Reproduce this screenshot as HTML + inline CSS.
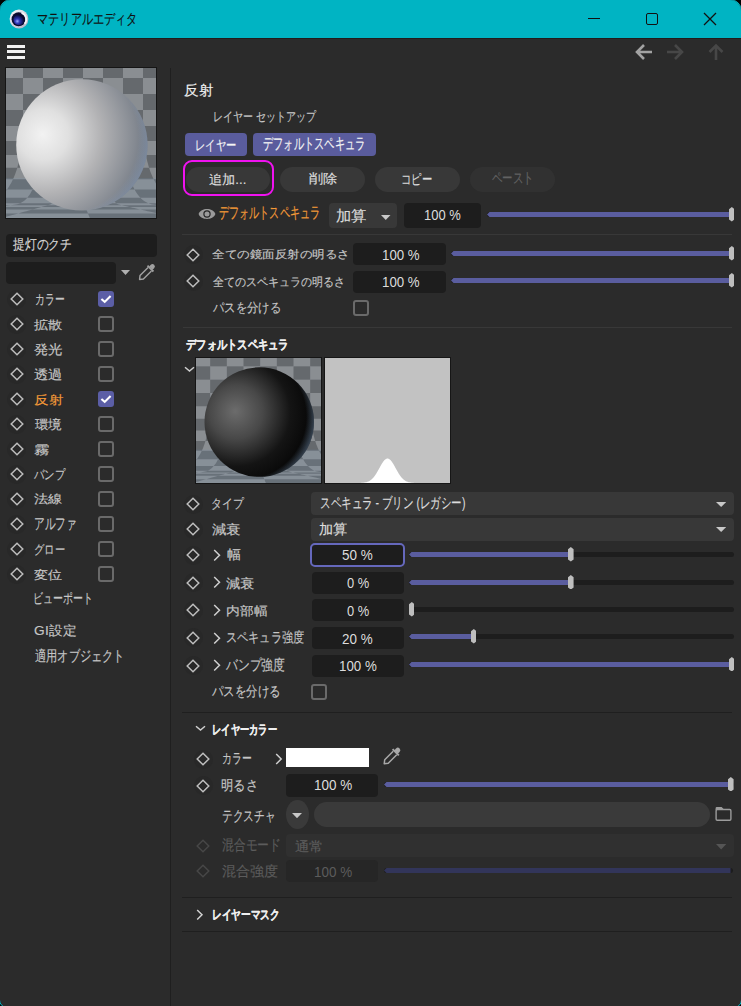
<!DOCTYPE html>
<html lang="ja">
<head>
<meta charset="utf-8">
<style>
*{box-sizing:border-box;margin:0;padding:0}
html,body{width:741px;height:1006px;overflow:hidden;background:#000}
body{font-family:"Liberation Sans",sans-serif;font-size:13px;color:#c9c9c9;position:relative}
.a{position:absolute}
.t{position:absolute;white-space:nowrap;transform-origin:0 0;-webkit-text-stroke:0.15px currentColor}
#win{position:absolute;left:-1px;top:-1px;width:743px;height:1009px;background:#2b2b2b;border:1px solid #00b4c3;border-radius:12px 12px 8px 8px;overflow:hidden}
#title{position:absolute;left:0;top:0;width:741px;height:38px;background:#00b4c3}
</style>
</head>
<body>
<div id="win">
  <div id="title">
    <svg class="a" style="left:9px;top:9px" width="20" height="20" viewBox="0 0 20 20">
      <defs>
        <radialGradient id="lg1" cx="35%" cy="65%" r="60%"><stop offset="0" stop-color="#9aa8ff"/><stop offset="0.35" stop-color="#3038b8"/><stop offset="0.8" stop-color="#12145a"/><stop offset="1" stop-color="#080828"/></radialGradient>
        <linearGradient id="lg2" x1="0" y1="0" x2="1" y2="1"><stop offset="0" stop-color="#ffffff"/><stop offset="1" stop-color="#a8a8c0"/></linearGradient>
      </defs>
      <circle cx="10" cy="10" r="9.4" fill="url(#lg2)"/>
      <circle cx="9.6" cy="10.2" r="7" fill="#0a0a30"/>
      <ellipse cx="10" cy="10.6" rx="5.6" ry="5.4" fill="url(#lg1)"/>
      <path d="M12.5 3.8A7 7 0 0 1 15.6 14.8" stroke="#f4f4f8" stroke-width="1.8" fill="none"/>
    </svg>
    <div class="a" style="left:588px;top:18px;width:12px;height:1px;background:#111"></div>
    <div class="a" style="left:646px;top:13px;width:12px;height:12px;border:1.3px solid #111;border-radius:2px"></div>
    <svg class="a" style="left:703px;top:12px" width="14" height="14" viewBox="0 0 14 14"><path d="M1 1L13 13M13 1L1 13" stroke="#111" stroke-width="1.3"/></svg>
  </div>
  <div class="a" style="left:0;top:38px;width:741px;height:1px;background:#221c1c"></div>
  <div class="a" style="left:7px;top:45px;width:18px;height:3px;background:#f2f2f2"></div>
  <div class="a" style="left:7px;top:50px;width:18px;height:3px;background:#f2f2f2"></div>
  <div class="a" style="left:7px;top:56px;width:18px;height:3px;background:#f2f2f2"></div>
  <svg class="a" style="left:634px;top:43px" width="20" height="18" viewBox="0 0 20 18"><path d="M3 9H18M10 2L3 9L10 16" stroke="#a2a2a2" stroke-width="2.6" fill="none"/></svg>
  <svg class="a" style="left:665px;top:43px" width="20" height="18" viewBox="0 0 20 18"><path d="M2 9H17M10 2L17 9L10 16" stroke="#474747" stroke-width="2.6" fill="none"/></svg>
  <svg class="a" style="left:706px;top:42px" width="20" height="20" viewBox="0 0 20 20"><path d="M10 3.5V18M3.5 10L10 3.5L16.5 10" stroke="#474747" stroke-width="2.6" fill="none"/></svg>
  <div class="a" style="left:170px;top:68px;width:1px;height:938px;background:#1f1f1f"></div>
<svg class="a" style="left:5px;top:67px" width="152" height="152" viewBox="0 0 152 152">
<defs>
<radialGradient id="sp1" cx="0.22" cy="0.44" r="0.88" fx="0.20" fy="0.42">
<stop offset="0" stop-color="#f2f2f2"/><stop offset="0.22" stop-color="#e0e0e0"/><stop offset="0.5" stop-color="#b2b2b4"/><stop offset="0.78" stop-color="#858a92"/><stop offset="1" stop-color="#5c6674"/></radialGradient>
<radialGradient id="rim1" cx="0.36" cy="0.45" r="0.66"><stop offset="0.86" stop-color="#8aa0c0" stop-opacity="0"/><stop offset="1" stop-color="#8aa0c0" stop-opacity="0.5"/></radialGradient>
<linearGradient id="rimm1" x1="0" y1="0" x2="1" y2="0"><stop offset="0.55" stop-color="#000" stop-opacity="0"/><stop offset="1" stop-color="#fff" stop-opacity="1"/></linearGradient>
<mask id="mk1"><rect width="152" height="152" fill="url(#rimm1)"/></mask>
</defs>
<rect width="152" height="152" fill="#151515"/>
<g transform="translate(1,1) scale(1.0)"><svg width="150" height="150" viewBox="0 0 150 150" overflow="hidden">
<rect width="150" height="150" fill="#8a8e92"/>
<polygon points="-163.0,-20.0 -163.0,-17.7 -163.0,-15.3 -163.0,-13.0 -163.0,-10.7 -163.0,-8.3 -163.0,-6.0 -143.0,-6.0 -143.0,-8.3 -143.0,-10.7 -143.0,-13.0 -143.0,-15.3 -143.0,-17.7 -143.0,-20.0" fill="#65696d"/>
<polygon points="-123.0,-20.0 -123.0,-17.7 -123.0,-15.3 -123.0,-13.0 -123.0,-10.7 -123.0,-8.3 -123.0,-6.0 -103.0,-6.0 -103.0,-8.3 -103.0,-10.7 -103.0,-13.0 -103.0,-15.3 -103.0,-17.7 -103.0,-20.0" fill="#65696d"/>
<polygon points="-83.0,-20.0 -83.0,-17.7 -83.0,-15.3 -83.0,-13.0 -83.0,-10.7 -83.0,-8.3 -83.0,-6.0 -63.0,-6.0 -63.0,-8.3 -63.0,-10.7 -63.0,-13.0 -63.0,-15.3 -63.0,-17.7 -63.0,-20.0" fill="#65696d"/>
<polygon points="-43.0,-20.0 -43.0,-17.7 -43.0,-15.3 -43.0,-13.0 -43.0,-10.7 -43.0,-8.3 -43.0,-6.0 -23.0,-6.0 -23.0,-8.3 -23.0,-10.7 -23.0,-13.0 -23.0,-15.3 -23.0,-17.7 -23.0,-20.0" fill="#65696d"/>
<polygon points="-3.0,-20.0 -3.0,-17.7 -3.0,-15.3 -3.0,-13.0 -3.0,-10.7 -3.0,-8.3 -3.0,-6.0 17.0,-6.0 17.0,-8.3 17.0,-10.7 17.0,-13.0 17.0,-15.3 17.0,-17.7 17.0,-20.0" fill="#65696d"/>
<polygon points="37.0,-20.0 37.0,-17.7 37.0,-15.3 37.0,-13.0 37.0,-10.7 37.0,-8.3 37.0,-6.0 57.0,-6.0 57.0,-8.3 57.0,-10.7 57.0,-13.0 57.0,-15.3 57.0,-17.7 57.0,-20.0" fill="#65696d"/>
<polygon points="77.0,-20.0 77.0,-17.7 77.0,-15.3 77.0,-13.0 77.0,-10.7 77.0,-8.3 77.0,-6.0 97.0,-6.0 97.0,-8.3 97.0,-10.7 97.0,-13.0 97.0,-15.3 97.0,-17.7 97.0,-20.0" fill="#65696d"/>
<polygon points="117.0,-20.0 117.0,-17.7 117.0,-15.3 117.0,-13.0 117.0,-10.7 117.0,-8.3 117.0,-6.0 137.0,-6.0 137.0,-8.3 137.0,-10.7 137.0,-13.0 137.0,-15.3 137.0,-17.7 137.0,-20.0" fill="#65696d"/>
<polygon points="157.0,-20.0 157.0,-17.7 157.0,-15.3 157.0,-13.0 157.0,-10.7 157.0,-8.3 157.0,-6.0 177.0,-6.0 177.0,-8.3 177.0,-10.7 177.0,-13.0 177.0,-15.3 177.0,-17.7 177.0,-20.0" fill="#65696d"/>
<polygon points="197.0,-20.0 197.0,-17.7 197.0,-15.3 197.0,-13.0 197.0,-10.7 197.0,-8.3 197.0,-6.0 217.0,-6.0 217.0,-8.3 217.0,-10.7 217.0,-13.0 217.0,-15.3 217.0,-17.7 217.0,-20.0" fill="#65696d"/>
<polygon points="237.0,-20.0 237.0,-17.7 237.0,-15.3 237.0,-13.0 237.0,-10.7 237.0,-8.3 237.0,-6.0 257.0,-6.0 257.0,-8.3 257.0,-10.7 257.0,-13.0 257.0,-15.3 257.0,-17.7 257.0,-20.0" fill="#65696d"/>
<polygon points="277.0,-20.0 277.0,-17.7 277.0,-15.3 277.0,-13.0 277.0,-10.7 277.0,-8.3 277.0,-6.0 297.0,-6.0 297.0,-8.3 297.0,-10.7 297.0,-13.0 297.0,-15.3 297.0,-17.7 297.0,-20.0" fill="#65696d"/>
<polygon points="-143.0,-6.0 -143.0,-3.3 -143.0,-0.7 -143.0,2.0 -143.0,4.7 -143.0,7.3 -143.0,10.0 -123.0,10.0 -123.0,7.3 -123.0,4.7 -123.0,2.0 -123.0,-0.7 -123.0,-3.3 -123.0,-6.0" fill="#65696d"/>
<polygon points="-103.0,-6.0 -103.0,-3.3 -103.0,-0.7 -103.0,2.0 -103.0,4.7 -103.0,7.3 -103.0,10.0 -83.0,10.0 -83.0,7.3 -83.0,4.7 -83.0,2.0 -83.0,-0.7 -83.0,-3.3 -83.0,-6.0" fill="#65696d"/>
<polygon points="-63.0,-6.0 -63.0,-3.3 -63.0,-0.7 -63.0,2.0 -63.0,4.7 -63.0,7.3 -63.0,10.0 -43.0,10.0 -43.0,7.3 -43.0,4.7 -43.0,2.0 -43.0,-0.7 -43.0,-3.3 -43.0,-6.0" fill="#65696d"/>
<polygon points="-23.0,-6.0 -23.0,-3.3 -23.0,-0.7 -23.0,2.0 -23.0,4.7 -23.0,7.3 -23.0,10.0 -3.0,10.0 -3.0,7.3 -3.0,4.7 -3.0,2.0 -3.0,-0.7 -3.0,-3.3 -3.0,-6.0" fill="#65696d"/>
<polygon points="17.0,-6.0 17.0,-3.3 17.0,-0.7 17.0,2.0 17.0,4.7 17.0,7.3 17.0,10.0 37.0,10.0 37.0,7.3 37.0,4.7 37.0,2.0 37.0,-0.7 37.0,-3.3 37.0,-6.0" fill="#65696d"/>
<polygon points="57.0,-6.0 57.0,-3.3 57.0,-0.7 57.0,2.0 57.0,4.7 57.0,7.3 57.0,10.0 77.0,10.0 77.0,7.3 77.0,4.7 77.0,2.0 77.0,-0.7 77.0,-3.3 77.0,-6.0" fill="#65696d"/>
<polygon points="97.0,-6.0 97.0,-3.3 97.0,-0.7 97.0,2.0 97.0,4.7 97.0,7.3 97.0,10.0 117.0,10.0 117.0,7.3 117.0,4.7 117.0,2.0 117.0,-0.7 117.0,-3.3 117.0,-6.0" fill="#65696d"/>
<polygon points="137.0,-6.0 137.0,-3.3 137.0,-0.7 137.0,2.0 137.0,4.7 137.0,7.3 137.0,10.0 157.0,10.0 157.0,7.3 157.0,4.7 157.0,2.0 157.0,-0.7 157.0,-3.3 157.0,-6.0" fill="#65696d"/>
<polygon points="177.0,-6.0 177.0,-3.3 177.0,-0.7 177.0,2.0 177.0,4.7 177.0,7.3 177.0,10.0 197.0,10.0 197.0,7.3 197.0,4.7 197.0,2.0 197.0,-0.7 197.0,-3.3 197.0,-6.0" fill="#65696d"/>
<polygon points="217.0,-6.0 217.0,-3.3 217.0,-0.7 217.0,2.0 217.0,4.7 217.0,7.3 217.0,10.0 237.0,10.0 237.0,7.3 237.0,4.7 237.0,2.0 237.0,-0.7 237.0,-3.3 237.0,-6.0" fill="#65696d"/>
<polygon points="257.0,-6.0 257.0,-3.3 257.0,-0.7 257.0,2.0 257.0,4.7 257.0,7.3 257.0,10.0 277.0,10.0 277.0,7.3 277.0,4.7 277.0,2.0 277.0,-0.7 277.0,-3.3 277.0,-6.0" fill="#65696d"/>
<polygon points="297.0,-6.0 297.0,-3.3 297.0,-0.7 297.0,2.0 297.0,4.7 297.0,7.3 297.0,10.0 317.0,10.0 317.0,7.3 317.0,4.7 317.0,2.0 317.0,-0.7 317.0,-3.3 317.0,-6.0" fill="#65696d"/>
<polygon points="-163.0,10.0 -163.0,12.7 -163.0,15.3 -163.0,18.0 -163.0,20.7 -163.0,23.3 -163.0,26.0 -143.0,26.0 -143.0,23.3 -143.0,20.7 -143.0,18.0 -143.0,15.3 -143.0,12.7 -143.0,10.0" fill="#65696d"/>
<polygon points="-123.0,10.0 -123.0,12.7 -123.0,15.3 -123.0,18.0 -123.0,20.7 -123.0,23.3 -123.0,26.0 -103.0,26.0 -103.0,23.3 -103.0,20.7 -103.0,18.0 -103.0,15.3 -103.0,12.7 -103.0,10.0" fill="#65696d"/>
<polygon points="-83.0,10.0 -83.0,12.7 -83.0,15.3 -83.0,18.0 -83.0,20.7 -83.0,23.3 -83.0,26.0 -63.0,26.0 -63.0,23.3 -63.0,20.7 -63.0,18.0 -63.0,15.3 -63.0,12.7 -63.0,10.0" fill="#65696d"/>
<polygon points="-43.0,10.0 -43.0,12.7 -43.0,15.3 -43.0,18.0 -43.0,20.7 -43.0,23.3 -43.0,26.0 -23.0,26.0 -23.0,23.3 -23.0,20.7 -23.0,18.0 -23.0,15.3 -23.0,12.7 -23.0,10.0" fill="#65696d"/>
<polygon points="-3.0,10.0 -3.0,12.7 -3.0,15.3 -3.0,18.0 -3.0,20.7 -3.0,23.3 -3.0,26.0 17.0,26.0 17.0,23.3 17.0,20.7 17.0,18.0 17.0,15.3 17.0,12.7 17.0,10.0" fill="#65696d"/>
<polygon points="37.0,10.0 37.0,12.7 37.0,15.3 37.0,18.0 37.0,20.7 37.0,23.3 37.0,26.0 57.0,26.0 57.0,23.3 57.0,20.7 57.0,18.0 57.0,15.3 57.0,12.7 57.0,10.0" fill="#65696d"/>
<polygon points="77.0,10.0 77.0,12.7 77.0,15.3 77.0,18.0 77.0,20.7 77.0,23.3 77.0,26.0 97.0,26.0 97.0,23.3 97.0,20.7 97.0,18.0 97.0,15.3 97.0,12.7 97.0,10.0" fill="#65696d"/>
<polygon points="117.0,10.0 117.0,12.7 117.0,15.3 117.0,18.0 117.0,20.7 117.0,23.3 117.0,26.0 137.0,26.0 137.0,23.3 137.0,20.7 137.0,18.0 137.0,15.3 137.0,12.7 137.0,10.0" fill="#65696d"/>
<polygon points="157.0,10.0 157.0,12.7 157.0,15.3 157.0,18.0 157.0,20.7 157.0,23.3 157.0,26.0 177.0,26.0 177.0,23.3 177.0,20.7 177.0,18.0 177.0,15.3 177.0,12.7 177.0,10.0" fill="#65696d"/>
<polygon points="197.0,10.0 197.0,12.7 197.0,15.3 197.0,18.0 197.0,20.7 197.0,23.3 197.0,26.0 217.0,26.0 217.0,23.3 217.0,20.7 217.0,18.0 217.0,15.3 217.0,12.7 217.0,10.0" fill="#65696d"/>
<polygon points="237.0,10.0 237.0,12.7 237.0,15.3 237.0,18.0 237.0,20.7 237.0,23.3 237.0,26.0 257.0,26.0 257.0,23.3 257.0,20.7 257.0,18.0 257.0,15.3 257.0,12.7 257.0,10.0" fill="#65696d"/>
<polygon points="277.0,10.0 277.0,12.7 277.0,15.3 277.0,18.0 277.0,20.7 277.0,23.3 277.0,26.0 297.0,26.0 297.0,23.3 297.0,20.7 297.0,18.0 297.0,15.3 297.0,12.7 297.0,10.0" fill="#65696d"/>
<polygon points="-143.0,26.0 -143.0,28.7 -143.0,31.3 -143.0,34.0 -143.0,36.7 -143.0,39.3 -143.0,42.0 -123.0,42.0 -123.0,39.3 -123.0,36.7 -123.0,34.0 -123.0,31.3 -123.0,28.7 -123.0,26.0" fill="#65696d"/>
<polygon points="-103.0,26.0 -103.0,28.7 -103.0,31.3 -103.0,34.0 -103.0,36.7 -103.0,39.3 -103.0,42.0 -83.0,42.0 -83.0,39.3 -83.0,36.7 -83.0,34.0 -83.0,31.3 -83.0,28.7 -83.0,26.0" fill="#65696d"/>
<polygon points="-63.0,26.0 -63.0,28.7 -63.0,31.3 -63.0,34.0 -63.0,36.7 -63.0,39.3 -63.0,42.0 -43.0,42.0 -43.0,39.3 -43.0,36.7 -43.0,34.0 -43.0,31.3 -43.0,28.7 -43.0,26.0" fill="#65696d"/>
<polygon points="-23.0,26.0 -23.0,28.7 -23.0,31.3 -23.0,34.0 -23.0,36.7 -23.0,39.3 -23.0,42.0 -3.0,42.0 -3.0,39.3 -3.0,36.7 -3.0,34.0 -3.0,31.3 -3.0,28.7 -3.0,26.0" fill="#65696d"/>
<polygon points="17.0,26.0 17.0,28.7 17.0,31.3 17.0,34.0 17.0,36.7 17.0,39.3 17.0,42.0 37.0,42.0 37.0,39.3 37.0,36.7 37.0,34.0 37.0,31.3 37.0,28.7 37.0,26.0" fill="#65696d"/>
<polygon points="57.0,26.0 57.0,28.7 57.0,31.3 57.0,34.0 57.0,36.7 57.0,39.3 57.0,42.0 77.0,42.0 77.0,39.3 77.0,36.7 77.0,34.0 77.0,31.3 77.0,28.7 77.0,26.0" fill="#65696d"/>
<polygon points="97.0,26.0 97.0,28.7 97.0,31.3 97.0,34.0 97.0,36.7 97.0,39.3 97.0,42.0 117.0,42.0 117.0,39.3 117.0,36.7 117.0,34.0 117.0,31.3 117.0,28.7 117.0,26.0" fill="#65696d"/>
<polygon points="137.0,26.0 137.0,28.7 137.0,31.3 137.0,34.0 137.0,36.7 137.0,39.3 137.0,42.0 157.0,42.0 157.0,39.3 157.0,36.7 157.0,34.0 157.0,31.3 157.0,28.7 157.0,26.0" fill="#65696d"/>
<polygon points="177.0,26.0 177.0,28.7 177.0,31.3 177.0,34.0 177.0,36.7 177.0,39.3 177.0,42.0 197.0,42.0 197.0,39.3 197.0,36.7 197.0,34.0 197.0,31.3 197.0,28.7 197.0,26.0" fill="#65696d"/>
<polygon points="217.0,26.0 217.0,28.7 217.0,31.3 217.0,34.0 217.0,36.7 217.0,39.3 217.0,42.0 237.0,42.0 237.0,39.3 237.0,36.7 237.0,34.0 237.0,31.3 237.0,28.7 237.0,26.0" fill="#65696d"/>
<polygon points="257.0,26.0 257.0,28.7 257.0,31.3 257.0,34.0 257.0,36.7 257.0,39.3 257.0,42.0 277.0,42.0 277.0,39.3 277.0,36.7 277.0,34.0 277.0,31.3 277.0,28.7 277.0,26.0" fill="#65696d"/>
<polygon points="297.0,26.0 297.0,28.7 297.0,31.3 297.0,34.0 297.0,36.7 297.0,39.3 297.0,42.0 317.0,42.0 317.0,39.3 317.0,36.7 317.0,34.0 317.0,31.3 317.0,28.7 317.0,26.0" fill="#65696d"/>
<polygon points="-163.0,42.0 -163.0,44.7 -163.0,47.3 -163.0,50.0 -163.0,52.7 -163.0,55.3 -163.2,57.9 -143.2,57.9 -143.0,55.3 -143.0,52.7 -143.0,50.0 -143.0,47.3 -143.0,44.7 -143.0,42.0" fill="#65696d"/>
<polygon points="-123.0,42.0 -123.0,44.7 -123.0,47.3 -123.0,50.0 -123.0,52.7 -123.0,55.3 -123.2,57.9 -103.1,57.9 -103.0,55.3 -103.0,52.7 -103.0,50.0 -103.0,47.3 -103.0,44.7 -103.0,42.0" fill="#65696d"/>
<polygon points="-83.0,42.0 -83.0,44.7 -83.0,47.3 -83.0,50.0 -83.0,52.7 -83.0,55.3 -83.1,57.9 -63.1,57.9 -63.0,55.3 -63.0,52.7 -63.0,50.0 -63.0,47.3 -63.0,44.7 -63.0,42.0" fill="#65696d"/>
<polygon points="-43.0,42.0 -43.0,44.7 -43.0,47.3 -43.0,50.0 -43.0,52.7 -43.0,55.3 -43.1,57.9 -23.1,57.9 -23.0,55.3 -23.0,52.7 -23.0,50.0 -23.0,47.3 -23.0,44.7 -23.0,42.0" fill="#65696d"/>
<polygon points="-3.0,42.0 -3.0,44.7 -3.0,47.3 -3.0,50.0 -3.0,52.7 -3.0,55.3 -3.1,57.9 17.0,57.9 17.0,55.3 17.0,52.7 17.0,50.0 17.0,47.3 17.0,44.7 17.0,42.0" fill="#65696d"/>
<polygon points="37.0,42.0 37.0,44.7 37.0,47.3 37.0,50.0 37.0,52.7 37.0,55.3 37.0,57.9 57.0,57.9 57.0,55.3 57.0,52.7 57.0,50.0 57.0,47.3 57.0,44.7 57.0,42.0" fill="#65696d"/>
<polygon points="77.0,42.0 77.0,44.7 77.0,47.3 77.0,50.0 77.0,52.7 77.0,55.3 77.0,57.9 97.0,57.9 97.0,55.3 97.0,52.7 97.0,50.0 97.0,47.3 97.0,44.7 97.0,42.0" fill="#65696d"/>
<polygon points="117.0,42.0 117.0,44.7 117.0,47.3 117.0,50.0 117.0,52.7 117.0,55.3 117.0,57.9 137.1,57.9 137.0,55.3 137.0,52.7 137.0,50.0 137.0,47.3 137.0,44.7 137.0,42.0" fill="#65696d"/>
<polygon points="157.0,42.0 157.0,44.7 157.0,47.3 157.0,50.0 157.0,52.7 157.0,55.3 157.1,57.9 177.1,57.9 177.0,55.3 177.0,52.7 177.0,50.0 177.0,47.3 177.0,44.7 177.0,42.0" fill="#65696d"/>
<polygon points="197.0,42.0 197.0,44.7 197.0,47.3 197.0,50.0 197.0,52.7 197.0,55.3 197.1,57.9 217.1,57.9 217.0,55.3 217.0,52.7 217.0,50.0 217.0,47.3 217.0,44.7 217.0,42.0" fill="#65696d"/>
<polygon points="237.0,42.0 237.0,44.7 237.0,47.3 237.0,50.0 237.0,52.7 237.0,55.3 237.1,57.9 257.1,57.9 257.0,55.3 257.0,52.7 257.0,50.0 257.0,47.3 257.0,44.7 257.0,42.0" fill="#65696d"/>
<polygon points="277.0,42.0 277.0,44.7 277.0,47.3 277.0,50.0 277.0,52.7 277.0,55.3 277.2,57.9 297.2,57.9 297.0,55.3 297.0,52.7 297.0,50.0 297.0,47.3 297.0,44.7 297.0,42.0" fill="#65696d"/>
<polygon points="-143.2,57.9 -143.4,60.5 -143.8,63.1 -144.2,65.6 -144.8,68.1 -145.4,70.5 -146.2,73.0 -125.9,73.0 -125.2,70.5 -124.6,68.1 -124.1,65.6 -123.7,63.1 -123.4,60.5 -123.2,57.9" fill="#65696d"/>
<polygon points="-103.1,57.9 -103.3,60.5 -103.6,63.1 -104.0,65.6 -104.4,68.1 -105.0,70.5 -105.6,73.0 -85.3,73.0 -84.8,70.5 -84.3,68.1 -83.9,65.6 -83.6,63.1 -83.3,60.5 -83.1,57.9" fill="#65696d"/>
<polygon points="-63.1,57.9 -63.3,60.5 -63.5,63.1 -63.8,65.6 -64.1,68.1 -64.5,70.5 -65.0,73.0 -44.7,73.0 -44.3,70.5 -44.0,68.1 -43.7,65.6 -43.4,63.1 -43.2,60.5 -43.1,57.9" fill="#65696d"/>
<polygon points="-23.1,57.9 -23.2,60.5 -23.3,63.1 -23.5,65.6 -23.8,68.1 -24.1,70.5 -24.4,73.0 -4.1,73.0 -3.9,70.5 -3.6,68.1 -3.4,65.6 -3.3,63.1 -3.2,60.5 -3.1,57.9" fill="#65696d"/>
<polygon points="17.0,57.9 16.9,60.5 16.8,63.1 16.7,65.6 16.5,68.1 16.4,70.5 16.2,73.0 36.4,73.0 36.6,70.5 36.7,68.1 36.8,65.6 36.9,63.1 36.9,60.5 37.0,57.9" fill="#65696d"/>
<polygon points="57.0,57.9 57.0,60.5 56.9,63.1 56.9,65.6 56.9,68.1 56.8,70.5 56.7,73.0 77.0,73.0 77.0,70.5 77.0,68.1 77.0,65.6 77.0,63.1 77.0,60.5 77.0,57.9" fill="#65696d"/>
<polygon points="97.0,57.9 97.0,60.5 97.1,63.1 97.1,65.6 97.2,68.1 97.2,70.5 97.3,73.0 117.6,73.0 117.5,70.5 117.3,68.1 117.2,65.6 117.1,63.1 117.1,60.5 117.0,57.9" fill="#65696d"/>
<polygon points="137.1,57.9 137.1,60.5 137.2,63.1 137.3,65.6 137.5,68.1 137.7,70.5 137.9,73.0 158.2,73.0 157.9,70.5 157.7,68.1 157.5,65.6 157.3,63.1 157.2,60.5 157.1,57.9" fill="#65696d"/>
<polygon points="177.1,57.9 177.2,60.5 177.4,63.1 177.6,65.6 177.8,68.1 178.1,70.5 178.5,73.0 198.8,73.0 198.4,70.5 198.0,68.1 197.7,65.6 197.4,63.1 197.2,60.5 197.1,57.9" fill="#65696d"/>
<polygon points="217.1,57.9 217.3,60.5 217.5,63.1 217.8,65.6 218.2,68.1 218.6,70.5 219.1,73.0 239.4,73.0 238.8,70.5 238.3,68.1 237.9,65.6 237.6,63.1 237.3,60.5 237.1,57.9" fill="#65696d"/>
<polygon points="257.1,57.9 257.4,60.5 257.6,63.1 258.0,65.6 258.5,68.1 259.0,70.5 259.7,73.0 280.0,73.0 279.2,70.5 278.6,68.1 278.1,65.6 277.7,63.1 277.4,60.5 277.2,57.9" fill="#65696d"/>
<polygon points="297.2,57.9 297.4,60.5 297.8,63.1 298.2,65.6 298.8,68.1 299.5,70.5 300.2,73.0 320.5,73.0 319.7,70.5 319.0,68.1 318.3,65.6 317.9,63.1 317.5,60.5 317.2,57.9" fill="#65696d"/>
<polygon points="-166.5,73.0 -167.4,75.4 -168.5,77.7 -169.7,80.1 -171.0,82.4 -172.4,84.6 -174.0,86.9 -153.1,86.9 -151.7,84.6 -150.3,82.4 -149.1,80.1 -148.0,77.7 -147.1,75.4 -146.2,73.0" fill="#65696d"/>
<polygon points="-125.9,73.0 -126.7,75.4 -127.6,77.7 -128.6,80.1 -129.7,82.4 -130.9,84.6 -132.2,86.9 -111.2,86.9 -110.1,84.6 -109.0,82.4 -108.0,80.1 -107.1,77.7 -106.3,75.4 -105.6,73.0" fill="#65696d"/>
<polygon points="-85.3,73.0 -85.9,75.4 -86.7,77.7 -87.4,80.1 -88.3,82.4 -89.3,84.6 -90.3,86.9 -69.4,86.9 -68.5,84.6 -67.6,82.4 -66.9,80.1 -66.2,77.7 -65.6,75.4 -65.0,73.0" fill="#65696d"/>
<polygon points="-44.7,73.0 -45.2,75.4 -45.7,77.7 -46.3,80.1 -47.0,82.4 -47.7,84.6 -48.5,86.9 -27.5,86.9 -26.9,84.6 -26.3,82.4 -25.8,80.1 -25.3,77.7 -24.8,75.4 -24.4,73.0" fill="#65696d"/>
<polygon points="-4.1,73.0 -4.5,75.4 -4.8,77.7 -5.2,80.1 -5.6,82.4 -6.1,84.6 -6.6,86.9 14.3,86.9 14.7,84.6 15.0,82.4 15.4,80.1 15.7,77.7 15.9,75.4 16.2,73.0" fill="#65696d"/>
<polygon points="36.4,73.0 36.3,75.4 36.1,77.7 35.9,80.1 35.7,82.4 35.5,84.6 35.2,86.9 56.2,86.9 56.3,84.6 56.4,82.4 56.5,80.1 56.6,77.7 56.7,75.4 56.7,73.0" fill="#65696d"/>
<polygon points="77.0,73.0 77.0,75.4 77.0,77.7 77.1,80.1 77.1,82.4 77.1,84.6 77.1,86.9 98.0,86.9 97.9,84.6 97.7,82.4 97.6,80.1 97.5,77.7 97.4,75.4 97.3,73.0" fill="#65696d"/>
<polygon points="117.6,73.0 117.8,75.4 118.0,77.7 118.2,80.1 118.4,82.4 118.7,84.6 118.9,86.9 139.9,86.9 139.5,84.6 139.1,82.4 138.7,80.1 138.4,77.7 138.2,75.4 137.9,73.0" fill="#65696d"/>
<polygon points="158.2,73.0 158.5,75.4 158.9,77.7 159.3,80.1 159.8,82.4 160.3,84.6 160.8,86.9 181.7,86.9 181.0,84.6 180.4,82.4 179.9,80.1 179.4,77.7 178.9,75.4 178.5,73.0" fill="#65696d"/>
<polygon points="198.8,73.0 199.3,75.4 199.8,77.7 200.4,80.1 201.1,82.4 201.8,84.6 202.6,86.9 223.6,86.9 222.6,84.6 221.8,82.4 221.0,80.1 220.3,77.7 219.6,75.4 219.1,73.0" fill="#65696d"/>
<polygon points="239.4,73.0 240.0,75.4 240.7,77.7 241.6,80.1 242.5,82.4 243.4,84.6 244.5,86.9 265.4,86.9 264.2,84.6 263.1,82.4 262.1,80.1 261.2,77.7 260.4,75.4 259.7,73.0" fill="#65696d"/>
<polygon points="280.0,73.0 280.8,75.4 281.7,77.7 282.7,80.1 283.8,82.4 285.0,84.6 286.3,86.9 307.3,86.9 305.8,84.6 304.5,82.4 303.2,80.1 302.1,77.7 301.1,75.4 300.2,73.0" fill="#65696d"/>
<polygon points="-153.1,86.9 -154.6,89.1 -156.3,91.3 -158.1,93.4 -160.1,95.5 -162.1,97.6 -164.3,99.7 -142.4,99.7 -140.4,97.6 -138.5,95.5 -136.7,93.4 -135.1,91.3 -133.6,89.1 -132.2,86.9" fill="#65696d"/>
<polygon points="-111.2,86.9 -112.5,89.1 -113.9,91.3 -115.3,93.4 -116.9,95.5 -118.6,97.6 -120.4,99.7 -98.4,99.7 -96.9,97.6 -95.4,95.5 -94.0,93.4 -92.7,91.3 -91.4,89.1 -90.3,86.9" fill="#65696d"/>
<polygon points="-69.4,86.9 -70.4,89.1 -71.4,91.3 -72.6,93.4 -73.8,95.5 -75.1,97.6 -76.5,99.7 -54.5,99.7 -53.3,97.6 -52.2,95.5 -51.2,93.4 -50.2,91.3 -49.3,89.1 -48.5,86.9" fill="#65696d"/>
<polygon points="-27.5,86.9 -28.2,89.1 -29.0,91.3 -29.8,93.4 -30.7,95.5 -31.6,97.6 -32.6,99.7 -10.6,99.7 -9.8,97.6 -9.1,95.5 -8.4,93.4 -7.8,91.3 -7.2,89.1 -6.6,86.9" fill="#65696d"/>
<polygon points="14.3,86.9 13.9,89.1 13.5,91.3 13.0,93.4 12.5,95.5 11.9,97.6 11.3,99.7 33.3,99.7 33.7,97.6 34.0,95.5 34.4,93.4 34.7,91.3 35.0,89.1 35.2,86.9" fill="#65696d"/>
<polygon points="56.2,86.9 56.0,89.1 55.9,91.3 55.8,93.4 55.6,95.5 55.4,97.6 55.2,99.7 77.2,99.7 77.2,97.6 77.2,95.5 77.1,93.4 77.1,91.3 77.1,89.1 77.1,86.9" fill="#65696d"/>
<polygon points="98.0,86.9 98.2,89.1 98.3,91.3 98.5,93.4 98.7,95.5 98.9,97.6 99.2,99.7 121.1,99.7 120.7,97.6 120.3,95.5 119.9,93.4 119.6,91.3 119.2,89.1 118.9,86.9" fill="#65696d"/>
<polygon points="139.9,86.9 140.3,89.1 140.8,91.3 141.3,93.4 141.9,95.5 142.4,97.6 143.1,99.7 165.0,99.7 164.2,97.6 163.4,95.5 162.7,93.4 162.0,91.3 161.4,89.1 160.8,86.9" fill="#65696d"/>
<polygon points="181.7,86.9 182.4,89.1 183.2,91.3 184.1,93.4 185.0,95.5 185.9,97.6 187.0,99.7 208.9,99.7 207.7,97.6 206.5,95.5 205.5,93.4 204.5,91.3 203.5,89.1 202.6,86.9" fill="#65696d"/>
<polygon points="223.6,86.9 224.6,89.1 225.7,91.3 226.9,93.4 228.1,95.5 229.5,97.6 230.9,99.7 252.8,99.7 251.2,97.6 249.7,95.5 248.2,93.4 246.9,91.3 245.7,89.1 244.5,86.9" fill="#65696d"/>
<polygon points="265.4,86.9 266.7,89.1 268.1,91.3 269.6,93.4 271.2,95.5 273.0,97.6 274.8,99.7 296.8,99.7 294.7,97.6 292.8,95.5 291.0,93.4 289.3,91.3 287.8,89.1 286.3,86.9" fill="#65696d"/>
<polygon points="307.3,86.9 308.9,89.1 310.6,91.3 312.4,93.4 314.4,95.5 316.5,97.6 318.7,99.7 340.7,99.7 338.2,97.6 335.9,95.5 333.8,93.4 331.8,91.3 329.9,89.1 328.2,86.9" fill="#65696d"/>
<polygon points="-186.3,99.7 -188.8,101.7 -191.5,103.7 -194.4,105.7 -197.5,107.6 -200.7,109.5 -204.1,111.3 -180.6,111.3 -177.5,109.5 -174.6,107.6 -171.8,105.7 -169.1,103.7 -166.7,101.7 -164.3,99.7" fill="#65696d"/>
<polygon points="-142.4,99.7 -144.5,101.7 -146.7,103.7 -149.1,105.7 -151.7,107.6 -154.3,109.5 -157.2,111.3 -133.7,111.3 -131.2,109.5 -128.8,107.6 -126.5,105.7 -124.3,103.7 -122.3,101.7 -120.4,99.7" fill="#65696d"/>
<polygon points="-98.4,99.7 -100.1,101.7 -101.9,103.7 -103.9,105.7 -105.9,107.6 -108.0,109.5 -110.3,111.3 -86.8,111.3 -84.8,109.5 -83.0,107.6 -81.2,105.7 -79.5,103.7 -78.0,101.7 -76.5,99.7" fill="#65696d"/>
<polygon points="-54.5,99.7 -55.8,101.7 -57.1,103.7 -58.6,105.7 -60.1,107.6 -61.7,109.5 -63.4,111.3 -39.9,111.3 -38.5,109.5 -37.2,107.6 -35.9,105.7 -34.7,103.7 -33.6,101.7 -32.6,99.7" fill="#65696d"/>
<polygon points="-10.6,99.7 -11.5,101.7 -12.4,103.7 -13.3,105.7 -14.3,107.6 -15.3,109.5 -16.5,111.3 7.0,111.3 7.8,109.5 8.6,107.6 9.3,105.7 10.0,103.7 10.7,101.7 11.3,99.7" fill="#65696d"/>
<polygon points="33.3,99.7 32.9,101.7 32.4,103.7 32.0,105.7 31.5,107.6 31.0,109.5 30.4,111.3 53.9,111.3 54.2,109.5 54.4,107.6 54.6,105.7 54.8,103.7 55.0,101.7 55.2,99.7" fill="#65696d"/>
<polygon points="77.2,99.7 77.2,101.7 77.2,103.7 77.3,105.7 77.3,107.6 77.3,109.5 77.3,111.3 100.8,111.3 100.5,109.5 100.2,107.6 99.9,105.7 99.6,103.7 99.4,101.7 99.2,99.7" fill="#65696d"/>
<polygon points="121.1,99.7 121.6,101.7 122.0,103.7 122.5,105.7 123.1,107.6 123.6,109.5 124.2,111.3 147.7,111.3 146.8,109.5 146.0,107.6 145.2,105.7 144.4,103.7 143.7,101.7 143.1,99.7" fill="#65696d"/>
<polygon points="165.0,99.7 165.9,101.7 166.8,103.7 167.8,105.7 168.9,107.6 170.0,109.5 171.1,111.3 194.6,111.3 193.1,109.5 191.8,107.6 190.5,105.7 189.2,103.7 188.1,101.7 187.0,99.7" fill="#65696d"/>
<polygon points="208.9,99.7 210.2,101.7 211.6,103.7 213.1,105.7 214.7,107.6 216.3,109.5 218.0,111.3 241.5,111.3 239.5,109.5 237.6,107.6 235.7,105.7 234.0,103.7 232.4,101.7 230.9,99.7" fill="#65696d"/>
<polygon points="252.8,99.7 254.6,101.7 256.4,103.7 258.4,105.7 260.4,107.6 262.6,109.5 264.9,111.3 288.4,111.3 285.8,109.5 283.3,107.6 281.0,105.7 278.8,103.7 276.7,101.7 274.8,99.7" fill="#65696d"/>
<polygon points="296.8,99.7 298.9,101.7 301.2,103.7 303.7,105.7 306.2,107.6 309.0,109.5 311.9,111.3 335.3,111.3 332.1,109.5 329.1,107.6 326.3,105.7 323.6,103.7 321.1,101.7 318.7,99.7" fill="#65696d"/>
<polygon points="-180.6,111.3 -183.9,113.1 -187.4,114.9 -191.0,116.6 -194.8,118.3 -198.9,119.9 -203.1,121.5 -177.6,121.5 -173.7,119.9 -170.1,118.3 -166.6,116.6 -163.3,114.9 -160.1,113.1 -157.2,111.3" fill="#65696d"/>
<polygon points="-133.7,111.3 -136.4,113.1 -139.2,114.9 -142.2,116.6 -145.3,118.3 -148.6,119.9 -152.1,121.5 -126.6,121.5 -123.5,119.9 -120.6,118.3 -117.8,116.6 -115.1,114.9 -112.6,113.1 -110.3,111.3" fill="#65696d"/>
<polygon points="-86.8,111.3 -88.9,113.1 -91.1,114.9 -93.4,116.6 -95.8,118.3 -98.4,119.9 -101.0,121.5 -75.5,121.5 -73.2,119.9 -71.1,118.3 -69.0,116.6 -67.0,114.9 -65.1,113.1 -63.4,111.3" fill="#65696d"/>
<polygon points="-39.9,111.3 -41.4,113.1 -42.9,114.9 -44.6,116.6 -46.3,118.3 -48.1,119.9 -50.0,121.5 -24.5,121.5 -23.0,119.9 -21.5,118.3 -20.2,116.6 -18.9,114.9 -17.6,113.1 -16.5,111.3" fill="#65696d"/>
<polygon points="7.0,111.3 6.1,113.1 5.2,114.9 4.2,116.6 3.2,118.3 2.1,119.9 1.0,121.5 26.5,121.5 27.3,119.9 28.0,118.3 28.6,116.6 29.3,114.9 29.9,113.1 30.4,111.3" fill="#65696d"/>
<polygon points="53.9,111.3 53.6,113.1 53.3,114.9 53.0,116.6 52.7,118.3 52.4,119.9 52.0,121.5 77.6,121.5 77.5,119.9 77.5,118.3 77.4,116.6 77.4,114.9 77.4,113.1 77.3,111.3" fill="#65696d"/>
<polygon points="100.8,111.3 101.1,113.1 101.5,114.9 101.8,116.6 102.2,118.3 102.6,119.9 103.1,121.5 128.6,121.5 127.8,119.9 127.0,118.3 126.2,116.6 125.5,114.9 124.9,113.1 124.2,111.3" fill="#65696d"/>
<polygon points="147.7,111.3 148.6,113.1 149.6,114.9 150.6,116.6 151.7,118.3 152.9,119.9 154.1,121.5 179.6,121.5 178.0,119.9 176.5,118.3 175.1,116.6 173.7,114.9 172.4,113.1 171.1,111.3" fill="#65696d"/>
<polygon points="194.6,111.3 196.1,113.1 197.8,114.9 199.5,116.6 201.3,118.3 203.1,119.9 205.1,121.5 230.6,121.5 228.3,119.9 226.0,118.3 223.9,116.6 221.8,114.9 219.9,113.1 218.0,111.3" fill="#65696d"/>
<polygon points="241.5,111.3 243.6,113.1 245.9,114.9 248.3,116.6 250.8,118.3 253.4,119.9 256.2,121.5 281.7,121.5 278.5,119.9 275.5,118.3 272.7,116.6 270.0,114.9 267.4,113.1 264.9,111.3" fill="#65696d"/>
<polygon points="288.4,111.3 291.1,113.1 294.0,114.9 297.1,116.6 300.3,118.3 303.6,119.9 307.2,121.5 332.7,121.5 328.8,119.9 325.0,118.3 321.5,116.6 318.1,114.9 314.9,113.1 311.9,111.3" fill="#65696d"/>
<polygon points="335.3,111.3 338.6,113.1 342.2,114.9 345.9,116.6 349.8,118.3 353.9,119.9 358.2,121.5 383.7,121.5 379.0,119.9 374.5,118.3 370.3,116.6 366.2,114.9 362.4,113.1 358.8,111.3" fill="#65696d"/>
<polygon points="-228.6,121.5 -233.5,123.0 -238.6,124.5 -244.0,125.9 -249.6,127.2 -255.6,128.5 -261.8,129.7 -233.5,129.7 -227.8,128.5 -222.3,127.2 -217.2,125.9 -212.3,124.5 -207.6,123.0 -203.1,121.5" fill="#65696d"/>
<polygon points="-177.6,121.5 -181.6,123.0 -185.9,124.5 -190.4,125.9 -195.1,127.2 -200.0,128.5 -205.2,129.7 -176.9,129.7 -172.2,128.5 -167.8,127.2 -163.6,125.9 -159.5,124.5 -155.7,123.0 -152.1,121.5" fill="#65696d"/>
<polygon points="-126.6,121.5 -129.8,123.0 -133.2,124.5 -136.8,125.9 -140.5,127.2 -144.4,128.5 -148.6,129.7 -120.3,129.7 -116.7,128.5 -113.2,127.2 -110.0,125.9 -106.8,124.5 -103.9,123.0 -101.0,121.5" fill="#65696d"/>
<polygon points="-75.5,121.5 -77.9,123.0 -80.5,124.5 -83.2,125.9 -85.9,127.2 -88.9,128.5 -92.0,129.7 -63.7,129.7 -61.1,128.5 -58.7,127.2 -56.3,125.9 -54.1,124.5 -52.0,123.0 -50.0,121.5" fill="#65696d"/>
<polygon points="-24.5,121.5 -26.1,123.0 -27.8,124.5 -29.5,125.9 -31.4,127.2 -33.3,128.5 -35.4,129.7 -7.1,129.7 -5.6,128.5 -4.1,127.2 -2.7,125.9 -1.4,124.5 -0.2,123.0 1.0,121.5" fill="#65696d"/>
<polygon points="26.5,121.5 25.7,123.0 24.9,124.5 24.1,125.9 23.2,127.2 22.2,128.5 21.2,129.7 49.5,129.7 50.0,128.5 50.4,127.2 50.9,125.9 51.3,124.5 51.7,123.0 52.0,121.5" fill="#65696d"/>
<polygon points="77.6,121.5 77.6,123.0 77.6,124.5 77.7,125.9 77.7,127.2 77.8,128.5 77.8,129.7 106.1,129.7 105.6,128.5 105.0,127.2 104.5,125.9 104.0,124.5 103.5,123.0 103.1,121.5" fill="#65696d"/>
<polygon points="128.6,121.5 129.4,123.0 130.3,124.5 131.3,125.9 132.3,127.2 133.3,128.5 134.4,129.7 162.7,129.7 161.1,128.5 159.6,127.2 158.1,125.9 156.7,124.5 155.4,123.0 154.1,121.5" fill="#65696d"/>
<polygon points="179.6,121.5 181.3,123.0 183.0,124.5 184.9,125.9 186.8,127.2 188.9,128.5 191.0,129.7 219.3,129.7 216.7,128.5 214.1,127.2 211.7,125.9 209.4,124.5 207.2,123.0 205.1,121.5" fill="#65696d"/>
<polygon points="230.6,121.5 233.1,123.0 235.8,124.5 238.5,125.9 241.4,127.2 244.4,128.5 247.6,129.7 275.9,129.7 272.2,128.5 268.7,127.2 265.3,125.9 262.1,124.5 259.1,123.0 256.2,121.5" fill="#65696d"/>
<polygon points="281.7,121.5 285.0,123.0 288.5,124.5 292.1,125.9 296.0,127.2 300.0,128.5 304.2,129.7 332.5,129.7 327.8,128.5 323.2,127.2 318.9,125.9 314.8,124.5 310.9,123.0 307.2,121.5" fill="#65696d"/>
<polygon points="332.7,121.5 336.8,123.0 341.2,124.5 345.7,125.9 350.5,127.2 355.6,128.5 360.8,129.7 389.1,129.7 383.3,128.5 377.8,127.2 372.5,125.9 367.5,124.5 362.8,123.0 358.2,121.5" fill="#65696d"/>
<polygon points="-233.5,129.7 -239.5,130.9 -245.7,131.9 -252.3,132.9 -259.2,133.8 -266.5,134.6 -274.1,135.3 -242.1,135.3 -235.2,134.6 -228.6,133.8 -222.3,132.9 -216.3,131.9 -210.6,130.9 -205.2,129.7" fill="#65696d"/>
<polygon points="-176.9,129.7 -181.8,130.9 -186.9,131.9 -192.3,132.9 -197.9,133.8 -203.8,134.6 -210.0,135.3 -178.0,135.3 -172.5,134.6 -167.2,133.8 -162.2,132.9 -157.5,131.9 -152.9,130.9 -148.6,129.7" fill="#65696d"/>
<polygon points="-120.3,129.7 -124.1,130.9 -128.0,131.9 -132.2,132.9 -136.6,133.8 -141.2,134.6 -146.0,135.3 -114.0,135.3 -109.8,134.6 -105.9,133.8 -102.2,132.9 -98.6,131.9 -95.2,130.9 -92.0,129.7" fill="#65696d"/>
<polygon points="-63.7,129.7 -66.4,130.9 -69.2,131.9 -72.1,132.9 -75.3,133.8 -78.5,134.6 -81.9,135.3 -49.9,135.3 -47.2,134.6 -44.6,133.8 -42.1,132.9 -39.8,131.9 -37.5,130.9 -35.4,129.7" fill="#65696d"/>
<polygon points="-7.1,129.7 -8.7,130.9 -10.3,131.9 -12.1,132.9 -13.9,133.8 -15.9,134.6 -17.9,135.3 14.1,135.3 15.5,134.6 16.7,133.8 17.9,132.9 19.1,131.9 20.2,130.9 21.2,129.7" fill="#65696d"/>
<polygon points="49.5,129.7 49.0,130.9 48.5,131.9 48.0,132.9 47.4,133.8 46.8,134.6 46.2,135.3 78.2,135.3 78.1,134.6 78.1,133.8 78.0,132.9 77.9,131.9 77.9,130.9 77.8,129.7" fill="#65696d"/>
<polygon points="106.1,129.7 106.7,130.9 107.4,131.9 108.0,132.9 108.7,133.8 109.5,134.6 110.2,135.3 142.3,135.3 140.8,134.6 139.4,133.8 138.1,132.9 136.8,131.9 135.6,130.9 134.4,129.7" fill="#65696d"/>
<polygon points="162.7,129.7 164.4,130.9 166.2,131.9 168.1,132.9 170.1,133.8 172.1,134.6 174.3,135.3 206.3,135.3 203.4,134.6 200.7,133.8 198.1,132.9 195.6,131.9 193.3,130.9 191.0,129.7" fill="#65696d"/>
<polygon points="219.3,129.7 222.1,130.9 225.1,131.9 228.1,132.9 231.4,133.8 234.8,134.6 238.3,135.3 270.4,135.3 266.1,134.6 262.0,133.8 258.2,132.9 254.5,131.9 251.0,130.9 247.6,129.7" fill="#65696d"/>
<polygon points="275.9,129.7 279.8,130.9 283.9,131.9 288.2,132.9 292.7,133.8 297.4,134.6 302.4,135.3 334.4,135.3 328.8,134.6 323.4,133.8 318.2,132.9 313.3,131.9 308.7,130.9 304.2,129.7" fill="#65696d"/>
<polygon points="332.5,129.7 337.5,130.9 342.8,131.9 348.3,132.9 354.0,133.8 360.1,134.6 366.5,135.3 398.5,135.3 391.4,134.6 384.7,133.8 378.3,132.9 372.2,131.9 366.4,130.9 360.8,129.7" fill="#65696d"/>
<polygon points="389.1,129.7 395.2,130.9 401.6,131.9 408.3,132.9 415.4,133.8 422.8,134.6 430.5,135.3 462.5,135.3 454.1,134.6 446.0,133.8 438.4,132.9 431.0,131.9 424.1,130.9 417.4,129.7" fill="#65696d"/>
<polygon points="-306.1,135.3 -314.9,135.8 -324.0,136.3 -333.6,136.6 -343.7,136.8 -354.3,137.0 -365.5,137.3 -328.5,137.3 -318.2,137.0 -308.5,136.8 -299.3,136.6 -290.5,136.3 -282.1,135.8 -274.1,135.3" fill="#65696d"/>
<polygon points="-242.1,135.3 -249.3,135.8 -257.0,136.3 -264.9,136.6 -273.3,136.8 -282.2,137.0 -291.4,137.3 -254.4,137.3 -246.1,137.0 -238.2,136.8 -230.6,136.6 -223.4,136.3 -216.6,135.8 -210.0,135.3" fill="#65696d"/>
<polygon points="-178.0,135.3 -183.8,135.8 -189.9,136.3 -196.3,136.6 -203.0,136.8 -210.0,137.0 -217.4,137.3 -180.4,137.3 -173.9,137.0 -167.8,136.8 -161.9,136.6 -156.4,136.3 -151.1,135.8 -146.0,135.3" fill="#65696d"/>
<polygon points="-114.0,135.3 -118.3,135.8 -122.8,136.3 -127.6,136.6 -132.6,136.8 -137.9,137.0 -143.4,137.3 -106.4,137.3 -101.8,137.0 -97.4,136.8 -93.3,136.6 -89.3,136.3 -85.5,135.8 -81.9,135.3" fill="#65696d"/>
<polygon points="-49.9,135.3 -52.8,135.8 -55.8,136.3 -58.9,136.6 -62.2,136.8 -65.7,137.0 -69.4,137.3 -32.3,137.3 -29.6,137.0 -27.0,136.8 -24.6,136.6 -22.2,136.3 -20.0,135.8 -17.9,135.3" fill="#65696d"/>
<polygon points="14.1,135.3 12.8,135.8 11.3,136.3 9.8,136.6 8.1,136.8 6.5,137.0 4.7,137.3 41.7,137.3 42.5,137.0 43.3,136.8 44.1,136.6 44.8,136.3 45.5,135.8 46.2,135.3" fill="#65696d"/>
<polygon points="78.2,135.3 78.3,135.8 78.4,136.3 78.4,136.6 78.5,136.8 78.6,137.0 78.7,137.3 115.7,137.3 114.7,137.0 113.7,136.8 112.8,136.6 111.9,136.3 111.0,135.8 110.2,135.3" fill="#65696d"/>
<polygon points="142.3,135.3 143.8,135.8 145.4,136.3 147.1,136.6 148.9,136.8 150.8,137.0 152.7,137.3 189.7,137.3 186.8,137.0 184.1,136.8 181.4,136.6 178.9,136.3 176.6,135.8 174.3,135.3" fill="#65696d"/>
<polygon points="206.3,135.3 209.3,135.8 212.5,136.3 215.8,136.6 219.3,136.8 222.9,137.0 226.8,137.3 263.8,137.3 259.0,137.0 254.4,136.8 250.1,136.6 246.0,136.3 242.1,135.8 238.3,135.3" fill="#65696d"/>
<polygon points="270.4,135.3 274.8,135.8 279.5,136.3 284.5,136.6 289.6,136.8 295.1,137.0 300.8,137.3 337.8,137.3 331.1,137.0 324.8,136.8 318.8,136.6 313.1,136.3 307.6,135.8 302.4,135.3" fill="#65696d"/>
<polygon points="334.4,135.3 340.4,135.8 346.6,136.3 353.1,136.6 360.0,136.8 367.2,137.0 374.8,137.3 411.8,137.3 403.3,137.0 395.2,136.8 387.5,136.6 380.1,136.3 373.1,135.8 366.5,135.3" fill="#65696d"/>
<polygon points="398.5,135.3 405.9,135.8 413.7,136.3 421.8,136.6 430.4,136.8 439.4,137.0 448.8,137.3 485.9,137.3 475.5,137.0 465.6,136.8 456.2,136.6 447.2,136.3 438.6,135.8 430.5,135.3" fill="#65696d"/>
<polygon points="-328.5,137.3 -339.2,137.5 -350.6,137.8 -362.5,138.0 -375.2,138.3 -388.7,138.6 -402.9,139.0 -359.1,139.0 -346.1,138.6 -333.9,138.3 -322.4,138.0 -311.5,137.8 -301.2,137.5 -291.4,137.3" fill="#65696d"/>
<polygon points="-254.4,137.3 -263.2,137.5 -272.5,137.8 -282.3,138.0 -292.6,138.3 -303.6,138.6 -315.2,139.0 -271.4,139.0 -261.1,138.6 -251.3,138.3 -242.1,138.0 -233.4,137.8 -225.2,137.5 -217.4,137.3" fill="#65696d"/>
<polygon points="-180.4,137.3 -187.2,137.5 -194.4,137.8 -202.0,138.0 -210.0,138.3 -218.5,138.6 -227.5,139.0 -183.7,139.0 -176.0,138.6 -168.7,138.3 -161.8,138.0 -155.3,137.8 -149.2,137.5 -143.4,137.3" fill="#65696d"/>
<polygon points="-106.4,137.3 -111.2,137.5 -116.3,137.8 -121.7,138.0 -127.4,138.3 -133.4,138.6 -139.9,139.0 -96.0,139.0 -90.9,138.6 -86.1,138.3 -81.6,138.0 -77.3,137.8 -73.2,137.5 -69.4,137.3" fill="#65696d"/>
<polygon points="-32.3,137.3 -35.2,137.5 -38.2,137.8 -41.4,138.0 -44.8,138.3 -48.4,138.6 -52.2,139.0 -8.3,139.0 -5.8,138.6 -3.5,138.3 -1.3,138.0 0.8,137.8 2.8,137.5 4.7,137.3" fill="#65696d"/>
<polygon points="41.7,137.3 40.8,137.5 39.9,137.8 38.9,138.0 37.8,138.3 36.7,138.6 35.5,139.0 79.4,139.0 79.3,138.6 79.1,138.3 79.0,138.0 78.9,137.8 78.8,137.5 78.7,137.3" fill="#65696d"/>
<polygon points="115.7,137.3 116.8,137.5 117.9,137.8 119.2,138.0 120.4,138.3 121.8,138.6 123.2,139.0 167.1,139.0 164.3,138.6 161.7,138.3 159.3,138.0 157.0,137.8 154.8,137.5 152.7,137.3" fill="#65696d"/>
<polygon points="189.7,137.3 192.8,137.5 196.0,137.8 199.4,138.0 203.0,138.3 206.9,138.6 210.9,139.0 254.8,139.0 249.4,138.6 244.4,138.3 239.6,138.0 235.1,137.8 230.8,137.5 226.8,137.3" fill="#65696d"/>
<polygon points="263.8,137.3 268.8,137.5 274.1,137.8 279.7,138.0 285.7,138.3 291.9,138.6 298.6,139.0 342.5,139.0 334.5,138.6 327.0,138.3 319.9,138.0 313.2,137.8 306.8,137.5 300.8,137.3" fill="#65696d"/>
<polygon points="337.8,137.3 344.8,137.5 352.2,137.8 360.0,138.0 368.3,138.3 377.0,138.6 386.3,139.0 430.2,139.0 419.6,138.6 409.6,138.3 400.2,138.0 391.2,137.8 382.8,137.5 374.8,137.3" fill="#65696d"/>
<polygon points="411.8,137.3 420.8,137.5 430.3,137.8 440.3,138.0 450.9,138.3 462.1,138.6 474.0,139.0 517.9,139.0 504.6,138.6 492.2,138.3 480.4,138.0 469.3,137.8 458.8,137.5 448.8,137.3" fill="#65696d"/>
<polygon points="485.9,137.3 496.8,137.5 508.4,137.8 520.6,138.0 533.5,138.3 547.2,138.6 561.7,139.0 605.6,139.0 589.7,138.6 574.8,138.3 560.7,138.0 547.4,137.8 534.8,137.5 522.9,137.3" fill="#65696d"/>
<polygon points="-446.8,139.0 -463.4,139.3 -481.0,139.7 -499.9,140.1 -520.0,140.5 -541.7,141.0 -564.9,141.4 -511.2,141.4 -489.8,141.0 -470.0,140.5 -451.5,140.1 -434.3,139.7 -418.1,139.3 -402.9,139.0" fill="#65696d"/>
<polygon points="-359.1,139.0 -372.9,139.3 -387.6,139.7 -403.2,140.1 -420.0,140.5 -438.0,141.0 -457.4,141.4 -403.6,141.4 -386.2,141.0 -370.0,140.5 -354.9,140.1 -340.8,139.7 -327.6,139.3 -315.2,139.0" fill="#65696d"/>
<polygon points="-271.4,139.0 -282.4,139.3 -294.1,139.7 -306.6,140.1 -320.0,140.5 -334.4,141.0 -349.8,141.4 -296.1,141.4 -282.6,141.0 -270.0,140.5 -258.3,140.1 -247.4,139.7 -237.2,139.3 -227.5,139.0" fill="#65696d"/>
<polygon points="-183.7,139.0 -191.9,139.3 -200.7,139.7 -210.0,140.1 -220.0,140.5 -230.7,141.0 -242.3,141.4 -188.5,141.4 -178.9,141.0 -170.0,140.5 -161.7,140.1 -153.9,139.7 -146.7,139.3 -139.9,139.0" fill="#65696d"/>
<polygon points="-96.0,139.0 -101.4,139.3 -107.2,139.7 -113.4,140.1 -120.0,140.5 -127.1,141.0 -134.7,141.4 -80.9,141.4 -75.3,141.0 -70.0,140.5 -65.1,140.1 -60.5,139.7 -56.2,139.3 -52.2,139.0" fill="#65696d"/>
<polygon points="-8.3,139.0 -11.0,139.3 -13.8,139.7 -16.8,140.1 -20.0,140.5 -23.5,141.0 -27.2,141.4 26.6,141.4 28.4,141.0 30.0,140.5 31.5,140.1 32.9,139.7 34.3,139.3 35.5,139.0" fill="#65696d"/>
<polygon points="79.4,139.0 79.5,139.3 79.7,139.7 79.8,140.1 80.0,140.5 80.2,141.0 80.4,141.4 134.2,141.4 132.0,141.0 130.0,140.5 128.1,140.1 126.4,139.7 124.8,139.3 123.2,139.0" fill="#65696d"/>
<polygon points="167.1,139.0 170.0,139.3 173.1,139.7 176.4,140.1 180.0,140.5 183.8,141.0 187.9,141.4 241.7,141.4 235.6,141.0 230.0,140.5 224.8,140.1 219.8,139.7 215.2,139.3 210.9,139.0" fill="#65696d"/>
<polygon points="254.8,139.0 260.5,139.3 266.6,139.7 273.1,140.1 280.0,140.5 287.5,141.0 295.5,141.4 349.3,141.4 339.3,141.0 330.0,140.5 321.4,140.1 313.3,139.7 305.7,139.3 298.6,139.0" fill="#65696d"/>
<polygon points="342.5,139.0 351.0,139.3 360.0,139.7 369.7,140.1 380.0,140.5 391.1,141.0 403.0,141.4 456.8,141.4 442.9,141.0 430.0,140.5 418.0,140.1 406.7,139.7 396.2,139.3 386.3,139.0" fill="#65696d"/>
<polygon points="430.2,139.0 441.4,139.3 453.5,139.7 466.3,140.1 480.0,140.5 494.7,141.0 510.6,141.4 564.4,141.4 546.6,141.0 530.0,140.5 514.6,140.1 500.2,139.7 486.7,139.3 474.0,139.0" fill="#65696d"/>
<polygon points="517.9,139.0 531.9,139.3 546.9,139.7 562.9,140.1 580.0,140.5 598.4,141.0 618.1,141.4 671.9,141.4 650.2,141.0 630.0,140.5 611.2,140.1 593.6,139.7 577.2,139.3 561.7,139.0" fill="#65696d"/>
<polygon points="-511.2,141.4 -534.1,142.0 -559.0,142.5 -586.0,143.2 -615.4,143.8 -647.5,144.6 -682.7,145.4 -613.2,145.4 -581.2,144.6 -552.0,143.8 -525.3,143.2 -500.8,142.5 -478.3,142.0 -457.4,141.4" fill="#65696d"/>
<polygon points="-403.6,141.4 -422.4,142.0 -442.7,142.5 -464.7,143.2 -488.7,143.8 -514.9,144.6 -543.7,145.4 -474.2,145.4 -448.6,144.6 -425.4,143.8 -404.1,143.2 -384.5,142.5 -366.5,142.0 -349.8,141.4" fill="#65696d"/>
<polygon points="-296.1,141.4 -310.6,142.0 -326.3,142.5 -343.4,143.2 -362.0,143.8 -382.3,144.6 -404.7,145.4 -335.1,145.4 -316.1,144.6 -298.7,143.8 -282.8,143.2 -268.2,142.5 -254.7,142.0 -242.3,141.4" fill="#65696d"/>
<polygon points="-188.5,141.4 -198.8,142.0 -210.0,142.5 -222.1,143.2 -235.3,143.8 -249.8,144.6 -265.6,145.4 -196.1,145.4 -183.5,144.6 -172.0,143.8 -161.5,143.2 -151.8,142.5 -143.0,142.0 -134.7,141.4" fill="#65696d"/>
<polygon points="-80.9,141.4 -87.1,142.0 -93.7,142.5 -100.9,143.2 -108.7,143.8 -117.2,144.6 -126.6,145.4 -57.1,145.4 -50.9,144.6 -45.3,143.8 -40.2,143.2 -35.5,142.5 -31.2,142.0 -27.2,141.4" fill="#65696d"/>
<polygon points="26.6,141.4 24.7,142.0 22.7,142.5 20.4,143.2 18.0,143.8 15.3,144.6 12.4,145.4 82.0,145.4 81.6,144.6 81.3,143.8 81.1,143.2 80.8,142.5 80.6,142.0 80.4,141.4" fill="#65696d"/>
<polygon points="134.2,141.4 136.5,142.0 139.0,142.5 141.7,143.2 144.7,143.8 147.9,144.6 151.5,145.4 221.0,145.4 214.2,144.6 208.0,143.8 202.3,143.2 197.1,142.5 192.4,142.0 187.9,141.4" fill="#65696d"/>
<polygon points="241.7,141.4 248.2,142.0 255.3,142.5 263.0,143.2 271.3,143.8 280.5,144.6 290.5,145.4 360.0,145.4 346.8,144.6 334.7,143.8 323.6,143.2 313.5,142.5 304.1,142.0 295.5,141.4" fill="#65696d"/>
<polygon points="349.3,141.4 360.0,142.0 371.6,142.5 384.3,143.2 398.0,143.8 413.0,144.6 429.5,145.4 499.0,145.4 479.3,144.6 461.4,143.8 444.9,143.2 429.8,142.5 415.9,142.0 403.0,141.4" fill="#65696d"/>
<polygon points="456.8,141.4 471.8,142.0 488.0,142.5 505.6,143.2 524.7,143.8 545.6,144.6 568.6,145.4 638.1,145.4 611.9,144.6 588.0,143.8 566.2,143.2 546.1,142.5 527.7,142.0 510.6,141.4" fill="#65696d"/>
<polygon points="564.4,141.4 583.6,142.0 604.3,142.5 626.8,143.2 651.4,143.8 678.2,144.6 707.6,145.4 777.1,145.4 744.5,144.6 714.7,143.8 687.5,143.2 662.5,142.5 639.4,142.0 618.1,141.4" fill="#65696d"/>
<polygon points="671.9,141.4 695.3,142.0 720.6,142.5 748.1,143.2 778.0,143.8 810.7,144.6 846.6,145.4 916.1,145.4 877.0,144.6 841.4,143.8 808.8,143.2 778.8,142.5 751.2,142.0 725.7,141.4" fill="#65696d"/>
<polygon points="-752.2,145.4 -791.0,146.2 -833.5,147.1 -880.4,148.1 -932.4,149.2 -990.4,150.4 -1055.5,151.8 -960.5,151.8 -900.9,150.4 -847.7,149.2 -800.1,148.1 -757.1,147.1 -718.2,146.2 -682.7,145.4" fill="#65696d"/>
<polygon points="-613.2,145.4 -645.4,146.2 -680.8,147.1 -719.8,148.1 -763.1,149.2 -811.3,150.4 -865.5,151.8 -770.5,151.8 -721.8,150.4 -678.4,149.2 -639.5,148.1 -604.4,147.1 -572.6,146.2 -543.7,145.4" fill="#65696d"/>
<polygon points="-474.2,145.4 -499.9,146.2 -528.1,147.1 -559.2,148.1 -593.8,149.2 -632.3,150.4 -675.5,151.8 -580.5,151.8 -542.8,150.4 -509.1,149.2 -479.0,148.1 -451.8,147.1 -427.1,146.2 -404.7,145.4" fill="#65696d"/>
<polygon points="-335.1,145.4 -354.3,146.2 -375.4,147.1 -398.7,148.1 -424.5,149.2 -453.2,150.4 -485.5,151.8 -390.5,151.8 -363.7,150.4 -339.8,149.2 -318.4,148.1 -299.1,147.1 -281.6,146.2 -265.6,145.4" fill="#65696d"/>
<polygon points="-196.1,145.4 -208.8,146.2 -222.7,147.1 -238.1,148.1 -255.2,149.2 -274.2,150.4 -295.5,151.8 -200.5,151.8 -184.6,150.4 -170.5,149.2 -157.8,148.1 -146.4,147.1 -136.0,146.2 -126.6,145.4" fill="#65696d"/>
<polygon points="-57.1,145.4 -63.3,146.2 -70.1,147.1 -77.5,148.1 -85.8,149.2 -95.1,150.4 -105.5,151.8 -10.5,151.8 -5.6,150.4 -1.2,149.2 2.7,148.1 6.3,147.1 9.5,146.2 12.4,145.4" fill="#65696d"/>
<polygon points="82.0,145.4 82.3,146.2 82.6,147.1 83.0,148.1 83.5,149.2 84.0,150.4 84.5,151.8 179.5,151.8 173.5,150.4 168.1,149.2 163.3,148.1 159.0,147.1 155.0,146.2 151.5,145.4" fill="#65696d"/>
<polygon points="221.0,145.4 227.8,146.2 235.3,147.1 243.6,148.1 252.8,149.2 263.0,150.4 274.5,151.8 369.5,151.8 352.5,150.4 337.4,149.2 323.9,148.1 311.7,147.1 300.6,146.2 290.5,145.4" fill="#65696d"/>
<polygon points="360.0,145.4 373.4,146.2 388.0,147.1 404.2,148.1 422.1,149.2 442.1,150.4 464.5,151.8 559.5,151.8 531.6,150.4 506.7,149.2 484.4,148.1 464.3,147.1 446.1,146.2 429.5,145.4" fill="#65696d"/>
<polygon points="499.0,145.4 518.9,146.2 540.7,147.1 564.7,148.1 591.4,149.2 621.1,150.4 654.5,151.8 749.5,151.8 710.7,150.4 676.1,149.2 645.0,148.1 617.0,147.1 591.7,146.2 568.6,145.4" fill="#65696d"/>
<polygon points="638.1,145.4 664.4,146.2 693.4,147.1 725.3,148.1 760.7,149.2 800.2,150.4 844.5,151.8 939.5,151.8 889.7,150.4 845.4,149.2 805.6,148.1 769.7,147.1 737.2,146.2 707.6,145.4" fill="#65696d"/>
<polygon points="777.1,145.4 810.0,146.2 846.1,147.1 885.9,148.1 930.0,149.2 979.3,150.4 1034.5,151.8 1129.5,151.8 1068.8,150.4 1014.7,149.2 966.2,148.1 922.4,147.1 882.7,146.2 846.6,145.4" fill="#65696d"/>
<rect x="0" y="110" width="150" height="40" fill="#7d9ab8" opacity="0.16"/>
<circle cx="75.9" cy="76.9" r="65.7" fill="url(#sp1)"/>
<circle cx="75.9" cy="76.9" r="65.7" fill="url(#rim1)"/>
</svg></g></svg>
<div class="a" style="left:6px;top:234px;width:150.5px;height:22.5px;background:#1d1d1d;border-radius:4px;"></div>
<div class="a" style="left:6px;top:262px;width:110px;height:22px;background:#1d1d1d;border-radius:4px;"></div>
<svg class="a" style="left:120.7px;top:270.1px" width="9" height="5" viewBox="0 0 9 5"><path d="M0 0H9L4.5 5Z" fill="#b0b0b0"/></svg>
<svg class="a" style="left:134.8px;top:262px" width="22" height="22" viewBox="-11 -11 22 22"><g transform="rotate(45) scale(0.95)"><path d="M-2.5 -7.2V-9.6A2.5 2.5 0 0 1 2.5 -9.6V-7.2Z" fill="#a0a0a0"/><rect x="-4.4" y="-7.6" width="8.8" height="1.9" fill="#a0a0a0"/><path d="M-2.5 -5.6V6.4L0 9.6L2.5 6.4V-5.6" fill="none" stroke="#a0a0a0" stroke-width="1.5" stroke-linejoin="round"/></g></svg>
<div class="a" style="left:7.300000000000001px;top:289.9px;width:19px;height:19px;border-radius:50%;background:#282828"></div>
<svg class="a" style="left:9.8px;top:292.4px" width="14" height="14" viewBox="0 0 14 14"><path d="M7 1.2L12.8 7L7 12.8L1.2 7Z" fill="none" stroke="#bdbdbd" stroke-width="1.5"/></svg>
<div class="a" style="left:98.2px;top:291.0px;width:16px;height:16px;background:#5b5ea6;border-radius:3px"></div>
<svg class="a" style="left:98.2px;top:291.0px" width="16" height="16" viewBox="0 0 16 16"><path d="M3.4 8L6.7 10.9L12.6 5" fill="none" stroke="#fff" stroke-width="2.1"/></svg>
<div class="a" style="left:7.300000000000001px;top:314.9px;width:19px;height:19px;border-radius:50%;background:#282828"></div>
<svg class="a" style="left:9.8px;top:317.4px" width="14" height="14" viewBox="0 0 14 14"><path d="M7 1.2L12.8 7L7 12.8L1.2 7Z" fill="none" stroke="#bdbdbd" stroke-width="1.5"/></svg>
<div class="a" style="left:98.2px;top:316.2px;width:16px;height:16px;border:2.7px solid #6a6a6a;border-radius:3px"></div>
<div class="a" style="left:7.300000000000001px;top:339.9px;width:19px;height:19px;border-radius:50%;background:#282828"></div>
<svg class="a" style="left:9.8px;top:342.4px" width="14" height="14" viewBox="0 0 14 14"><path d="M7 1.2L12.8 7L7 12.8L1.2 7Z" fill="none" stroke="#bdbdbd" stroke-width="1.5"/></svg>
<div class="a" style="left:98.2px;top:341.2px;width:16px;height:16px;border:2.7px solid #6a6a6a;border-radius:3px"></div>
<div class="a" style="left:7.300000000000001px;top:364.9px;width:19px;height:19px;border-radius:50%;background:#282828"></div>
<svg class="a" style="left:9.8px;top:367.4px" width="14" height="14" viewBox="0 0 14 14"><path d="M7 1.2L12.8 7L7 12.8L1.2 7Z" fill="none" stroke="#bdbdbd" stroke-width="1.5"/></svg>
<div class="a" style="left:98.2px;top:366.2px;width:16px;height:16px;border:2.7px solid #6a6a6a;border-radius:3px"></div>
<div class="a" style="left:7.300000000000001px;top:389.9px;width:19px;height:19px;border-radius:50%;background:#282828"></div>
<svg class="a" style="left:9.8px;top:392.4px" width="14" height="14" viewBox="0 0 14 14"><path d="M7 1.2L12.8 7L7 12.8L1.2 7Z" fill="none" stroke="#bdbdbd" stroke-width="1.5"/></svg>
<div class="a" style="left:98.2px;top:391.0px;width:16px;height:16px;background:#5b5ea6;border-radius:3px"></div>
<svg class="a" style="left:98.2px;top:391.0px" width="16" height="16" viewBox="0 0 16 16"><path d="M3.4 8L6.7 10.9L12.6 5" fill="none" stroke="#fff" stroke-width="2.1"/></svg>
<div class="a" style="left:7.300000000000001px;top:414.9px;width:19px;height:19px;border-radius:50%;background:#282828"></div>
<svg class="a" style="left:9.8px;top:417.4px" width="14" height="14" viewBox="0 0 14 14"><path d="M7 1.2L12.8 7L7 12.8L1.2 7Z" fill="none" stroke="#bdbdbd" stroke-width="1.5"/></svg>
<div class="a" style="left:98.2px;top:416.2px;width:16px;height:16px;border:2.7px solid #6a6a6a;border-radius:3px"></div>
<div class="a" style="left:7.300000000000001px;top:439.9px;width:19px;height:19px;border-radius:50%;background:#282828"></div>
<svg class="a" style="left:9.8px;top:442.4px" width="14" height="14" viewBox="0 0 14 14"><path d="M7 1.2L12.8 7L7 12.8L1.2 7Z" fill="none" stroke="#bdbdbd" stroke-width="1.5"/></svg>
<div class="a" style="left:98.2px;top:441.2px;width:16px;height:16px;border:2.7px solid #6a6a6a;border-radius:3px"></div>
<div class="a" style="left:7.300000000000001px;top:464.9px;width:19px;height:19px;border-radius:50%;background:#282828"></div>
<svg class="a" style="left:9.8px;top:467.4px" width="14" height="14" viewBox="0 0 14 14"><path d="M7 1.2L12.8 7L7 12.8L1.2 7Z" fill="none" stroke="#bdbdbd" stroke-width="1.5"/></svg>
<div class="a" style="left:98.2px;top:466.2px;width:16px;height:16px;border:2.7px solid #6a6a6a;border-radius:3px"></div>
<div class="a" style="left:7.300000000000001px;top:489.9px;width:19px;height:19px;border-radius:50%;background:#282828"></div>
<svg class="a" style="left:9.8px;top:492.4px" width="14" height="14" viewBox="0 0 14 14"><path d="M7 1.2L12.8 7L7 12.8L1.2 7Z" fill="none" stroke="#bdbdbd" stroke-width="1.5"/></svg>
<div class="a" style="left:98.2px;top:491.2px;width:16px;height:16px;border:2.7px solid #6a6a6a;border-radius:3px"></div>
<div class="a" style="left:7.300000000000001px;top:514.9px;width:19px;height:19px;border-radius:50%;background:#282828"></div>
<svg class="a" style="left:9.8px;top:517.4px" width="14" height="14" viewBox="0 0 14 14"><path d="M7 1.2L12.8 7L7 12.8L1.2 7Z" fill="none" stroke="#bdbdbd" stroke-width="1.5"/></svg>
<div class="a" style="left:98.2px;top:516.1999999999999px;width:16px;height:16px;border:2.7px solid #6a6a6a;border-radius:3px"></div>
<div class="a" style="left:7.300000000000001px;top:539.9px;width:19px;height:19px;border-radius:50%;background:#282828"></div>
<svg class="a" style="left:9.8px;top:542.4px" width="14" height="14" viewBox="0 0 14 14"><path d="M7 1.2L12.8 7L7 12.8L1.2 7Z" fill="none" stroke="#bdbdbd" stroke-width="1.5"/></svg>
<div class="a" style="left:98.2px;top:541.1999999999999px;width:16px;height:16px;border:2.7px solid #6a6a6a;border-radius:3px"></div>
<div class="a" style="left:7.300000000000001px;top:564.9px;width:19px;height:19px;border-radius:50%;background:#282828"></div>
<svg class="a" style="left:9.8px;top:567.4px" width="14" height="14" viewBox="0 0 14 14"><path d="M7 1.2L12.8 7L7 12.8L1.2 7Z" fill="none" stroke="#bdbdbd" stroke-width="1.5"/></svg>
<div class="a" style="left:98.2px;top:566.1999999999999px;width:16px;height:16px;border:2.7px solid #6a6a6a;border-radius:3px"></div>
<div class="a" style="left:185px;top:133.2px;width:62.2px;height:23px;background:#5a5c9d;border-radius:4px"></div>
<div class="a" style="left:252.6px;top:133.2px;width:123.6px;height:23px;background:#5a5c9d;border-radius:4px"></div>
<div class="a" style="left:186px;top:166.8px;width:84px;height:25px;background:#383838;border-radius:12.5px"></div>
<div class="a" style="left:183px;top:160.2px;width:91.2px;height:35.4px;border:2.4px solid #f012f0;border-radius:9px"></div>
<div class="a" style="left:280px;top:166.8px;width:85px;height:25px;background:#383838;border-radius:12.5px"></div>
<div class="a" style="left:375px;top:166.8px;width:84.5px;height:25px;background:#383838;border-radius:12.5px"></div>
<div class="a" style="left:469.6px;top:166.8px;width:85px;height:25px;background:#313131;border-radius:12.5px"></div>
<svg class="a" style="left:198px;top:207px" width="18" height="14" viewBox="0 0 18 14"><path d="M0.6 7C3 0.4 15 0.4 17.4 7C15 13.6 3 13.6 0.6 7Z" fill="#9a9a9a"/><circle cx="9" cy="7" r="3.7" fill="#262626"/><circle cx="9" cy="7" r="2.5" fill="#9a9a9a"/></svg>
<div class="a" style="left:328.7px;top:203px;width:68.8px;height:25px;background:#383838;border-radius:4px;"></div>
<svg class="a" style="left:381.25px;top:214.5px" width="9.5" height="5" viewBox="0 0 9.5 5"><path d="M0 0H9.5L4.75 5Z" fill="#c8c8c8"/></svg>
<div class="a" style="left:403.6px;top:203px;width:77.7px;height:25px;background:#1d1d1d;border-radius:4px;"></div>
<div class="a" style="left:487px;top:211.8px;width:247px;height:5px;background:#1d1d1d;border-radius:3px"></div>
<svg class="a" style="left:487px;top:211.8px" width="244.29999999999995" height="5" viewBox="0 0 244.29999999999995 5" preserveAspectRatio="none"><path d="M0 2.5L2.5 0H244.29999999999995V5H2.5Z" fill="#5a5d9f"/></svg>
<svg class="a" style="left:728.5px;top:207.0px" width="5.6" height="14.6" viewBox="0 0 5.6 14.6"><path d="M0 2.2L2.8 0L5.6 2.2V12.4L2.8 14.6L0 12.4Z" fill="#bebebe"/></svg>
<div class="a" style="left:182.4px;top:234px;width:549.9px;height:1px;background:#383838"></div>
<div class="a" style="left:183.9px;top:245.0px;width:19px;height:19px;border-radius:50%;background:#282828"></div>
<svg class="a" style="left:186.4px;top:247.5px" width="14" height="14" viewBox="0 0 14 14"><path d="M7 1.2L12.8 7L7 12.8L1.2 7Z" fill="none" stroke="#bdbdbd" stroke-width="1.5"/></svg>
<div class="a" style="left:353.3px;top:243px;width:93.1px;height:21.7px;background:#1d1d1d;border-radius:4px;"></div>
<div class="a" style="left:451px;top:250.9px;width:283px;height:5px;background:#1d1d1d;border-radius:3px"></div>
<svg class="a" style="left:451px;top:250.9px" width="280.29999999999995" height="5" viewBox="0 0 280.29999999999995 5" preserveAspectRatio="none"><path d="M0 2.5L2.5 0H280.29999999999995V5H2.5Z" fill="#5a5d9f"/></svg>
<svg class="a" style="left:728.5px;top:246.1px" width="5.6" height="14.6" viewBox="0 0 5.6 14.6"><path d="M0 2.2L2.8 0L5.6 2.2V12.4L2.8 14.6L0 12.4Z" fill="#bebebe"/></svg>
<div class="a" style="left:183.9px;top:271.9px;width:19px;height:19px;border-radius:50%;background:#282828"></div>
<svg class="a" style="left:186.4px;top:274.4px" width="14" height="14" viewBox="0 0 14 14"><path d="M7 1.2L12.8 7L7 12.8L1.2 7Z" fill="none" stroke="#bdbdbd" stroke-width="1.5"/></svg>
<div class="a" style="left:353.3px;top:271px;width:93.1px;height:22px;background:#1d1d1d;border-radius:4px;"></div>
<div class="a" style="left:451px;top:278.1px;width:283px;height:5px;background:#1d1d1d;border-radius:3px"></div>
<svg class="a" style="left:451px;top:278.1px" width="280.29999999999995" height="5" viewBox="0 0 280.29999999999995 5" preserveAspectRatio="none"><path d="M0 2.5L2.5 0H280.29999999999995V5H2.5Z" fill="#5a5d9f"/></svg>
<svg class="a" style="left:728.5px;top:273.3px" width="5.6" height="14.6" viewBox="0 0 5.6 14.6"><path d="M0 2.2L2.8 0L5.6 2.2V12.4L2.8 14.6L0 12.4Z" fill="#bebebe"/></svg>
<div class="a" style="left:353.2px;top:299.8px;width:16px;height:16px;border:2.7px solid #6a6a6a;border-radius:3px"></div>
<div class="a" style="left:182.6px;top:327px;width:549.6999999999999px;height:1px;background:#383838"></div>
<svg class="a" style="left:183.5px;top:366px" width="11" height="7" viewBox="0 0 11 7"><path d="M1 1.2L5.5 5L10 1.2" fill="none" stroke="#cfcfcf" stroke-width="1.5"/></svg>
<svg class="a" style="left:195px;top:357px" width="127" height="127" viewBox="0 0 127 127">
<defs>
<radialGradient id="sp2" cx="0.30" cy="0.42" r="0.70" fx="0.28" fy="0.40">
<stop offset="0" stop-color="#6c6c6c"/><stop offset="0.35" stop-color="#484848"/><stop offset="0.7" stop-color="#141414"/><stop offset="1" stop-color="#050505"/></radialGradient>
<radialGradient id="rim2" cx="0.36" cy="0.45" r="0.66"><stop offset="0.86" stop-color="#6f8aa8" stop-opacity="0"/><stop offset="1" stop-color="#6f8aa8" stop-opacity="0.55"/></radialGradient>
<linearGradient id="rimm2" x1="0" y1="0" x2="1" y2="0"><stop offset="0.6" stop-color="#000" stop-opacity="0"/><stop offset="1" stop-color="#fff" stop-opacity="1"/></linearGradient>
<mask id="mk2"><rect width="127" height="127" fill="url(#rimm2)"/></mask>
</defs>
<rect width="127" height="127" fill="#151515"/>
<g transform="translate(1,1) scale(0.8333333333333334)"><svg width="150" height="150" viewBox="0 0 150 150" overflow="hidden">
<rect width="150" height="150" fill="#8a8e92"/>
<polygon points="-163.0,-20.0 -163.0,-17.7 -163.0,-15.3 -163.0,-13.0 -163.0,-10.7 -163.0,-8.3 -163.0,-6.0 -143.0,-6.0 -143.0,-8.3 -143.0,-10.7 -143.0,-13.0 -143.0,-15.3 -143.0,-17.7 -143.0,-20.0" fill="#65696d"/>
<polygon points="-123.0,-20.0 -123.0,-17.7 -123.0,-15.3 -123.0,-13.0 -123.0,-10.7 -123.0,-8.3 -123.0,-6.0 -103.0,-6.0 -103.0,-8.3 -103.0,-10.7 -103.0,-13.0 -103.0,-15.3 -103.0,-17.7 -103.0,-20.0" fill="#65696d"/>
<polygon points="-83.0,-20.0 -83.0,-17.7 -83.0,-15.3 -83.0,-13.0 -83.0,-10.7 -83.0,-8.3 -83.0,-6.0 -63.0,-6.0 -63.0,-8.3 -63.0,-10.7 -63.0,-13.0 -63.0,-15.3 -63.0,-17.7 -63.0,-20.0" fill="#65696d"/>
<polygon points="-43.0,-20.0 -43.0,-17.7 -43.0,-15.3 -43.0,-13.0 -43.0,-10.7 -43.0,-8.3 -43.0,-6.0 -23.0,-6.0 -23.0,-8.3 -23.0,-10.7 -23.0,-13.0 -23.0,-15.3 -23.0,-17.7 -23.0,-20.0" fill="#65696d"/>
<polygon points="-3.0,-20.0 -3.0,-17.7 -3.0,-15.3 -3.0,-13.0 -3.0,-10.7 -3.0,-8.3 -3.0,-6.0 17.0,-6.0 17.0,-8.3 17.0,-10.7 17.0,-13.0 17.0,-15.3 17.0,-17.7 17.0,-20.0" fill="#65696d"/>
<polygon points="37.0,-20.0 37.0,-17.7 37.0,-15.3 37.0,-13.0 37.0,-10.7 37.0,-8.3 37.0,-6.0 57.0,-6.0 57.0,-8.3 57.0,-10.7 57.0,-13.0 57.0,-15.3 57.0,-17.7 57.0,-20.0" fill="#65696d"/>
<polygon points="77.0,-20.0 77.0,-17.7 77.0,-15.3 77.0,-13.0 77.0,-10.7 77.0,-8.3 77.0,-6.0 97.0,-6.0 97.0,-8.3 97.0,-10.7 97.0,-13.0 97.0,-15.3 97.0,-17.7 97.0,-20.0" fill="#65696d"/>
<polygon points="117.0,-20.0 117.0,-17.7 117.0,-15.3 117.0,-13.0 117.0,-10.7 117.0,-8.3 117.0,-6.0 137.0,-6.0 137.0,-8.3 137.0,-10.7 137.0,-13.0 137.0,-15.3 137.0,-17.7 137.0,-20.0" fill="#65696d"/>
<polygon points="157.0,-20.0 157.0,-17.7 157.0,-15.3 157.0,-13.0 157.0,-10.7 157.0,-8.3 157.0,-6.0 177.0,-6.0 177.0,-8.3 177.0,-10.7 177.0,-13.0 177.0,-15.3 177.0,-17.7 177.0,-20.0" fill="#65696d"/>
<polygon points="197.0,-20.0 197.0,-17.7 197.0,-15.3 197.0,-13.0 197.0,-10.7 197.0,-8.3 197.0,-6.0 217.0,-6.0 217.0,-8.3 217.0,-10.7 217.0,-13.0 217.0,-15.3 217.0,-17.7 217.0,-20.0" fill="#65696d"/>
<polygon points="237.0,-20.0 237.0,-17.7 237.0,-15.3 237.0,-13.0 237.0,-10.7 237.0,-8.3 237.0,-6.0 257.0,-6.0 257.0,-8.3 257.0,-10.7 257.0,-13.0 257.0,-15.3 257.0,-17.7 257.0,-20.0" fill="#65696d"/>
<polygon points="277.0,-20.0 277.0,-17.7 277.0,-15.3 277.0,-13.0 277.0,-10.7 277.0,-8.3 277.0,-6.0 297.0,-6.0 297.0,-8.3 297.0,-10.7 297.0,-13.0 297.0,-15.3 297.0,-17.7 297.0,-20.0" fill="#65696d"/>
<polygon points="-143.0,-6.0 -143.0,-3.3 -143.0,-0.7 -143.0,2.0 -143.0,4.7 -143.0,7.3 -143.0,10.0 -123.0,10.0 -123.0,7.3 -123.0,4.7 -123.0,2.0 -123.0,-0.7 -123.0,-3.3 -123.0,-6.0" fill="#65696d"/>
<polygon points="-103.0,-6.0 -103.0,-3.3 -103.0,-0.7 -103.0,2.0 -103.0,4.7 -103.0,7.3 -103.0,10.0 -83.0,10.0 -83.0,7.3 -83.0,4.7 -83.0,2.0 -83.0,-0.7 -83.0,-3.3 -83.0,-6.0" fill="#65696d"/>
<polygon points="-63.0,-6.0 -63.0,-3.3 -63.0,-0.7 -63.0,2.0 -63.0,4.7 -63.0,7.3 -63.0,10.0 -43.0,10.0 -43.0,7.3 -43.0,4.7 -43.0,2.0 -43.0,-0.7 -43.0,-3.3 -43.0,-6.0" fill="#65696d"/>
<polygon points="-23.0,-6.0 -23.0,-3.3 -23.0,-0.7 -23.0,2.0 -23.0,4.7 -23.0,7.3 -23.0,10.0 -3.0,10.0 -3.0,7.3 -3.0,4.7 -3.0,2.0 -3.0,-0.7 -3.0,-3.3 -3.0,-6.0" fill="#65696d"/>
<polygon points="17.0,-6.0 17.0,-3.3 17.0,-0.7 17.0,2.0 17.0,4.7 17.0,7.3 17.0,10.0 37.0,10.0 37.0,7.3 37.0,4.7 37.0,2.0 37.0,-0.7 37.0,-3.3 37.0,-6.0" fill="#65696d"/>
<polygon points="57.0,-6.0 57.0,-3.3 57.0,-0.7 57.0,2.0 57.0,4.7 57.0,7.3 57.0,10.0 77.0,10.0 77.0,7.3 77.0,4.7 77.0,2.0 77.0,-0.7 77.0,-3.3 77.0,-6.0" fill="#65696d"/>
<polygon points="97.0,-6.0 97.0,-3.3 97.0,-0.7 97.0,2.0 97.0,4.7 97.0,7.3 97.0,10.0 117.0,10.0 117.0,7.3 117.0,4.7 117.0,2.0 117.0,-0.7 117.0,-3.3 117.0,-6.0" fill="#65696d"/>
<polygon points="137.0,-6.0 137.0,-3.3 137.0,-0.7 137.0,2.0 137.0,4.7 137.0,7.3 137.0,10.0 157.0,10.0 157.0,7.3 157.0,4.7 157.0,2.0 157.0,-0.7 157.0,-3.3 157.0,-6.0" fill="#65696d"/>
<polygon points="177.0,-6.0 177.0,-3.3 177.0,-0.7 177.0,2.0 177.0,4.7 177.0,7.3 177.0,10.0 197.0,10.0 197.0,7.3 197.0,4.7 197.0,2.0 197.0,-0.7 197.0,-3.3 197.0,-6.0" fill="#65696d"/>
<polygon points="217.0,-6.0 217.0,-3.3 217.0,-0.7 217.0,2.0 217.0,4.7 217.0,7.3 217.0,10.0 237.0,10.0 237.0,7.3 237.0,4.7 237.0,2.0 237.0,-0.7 237.0,-3.3 237.0,-6.0" fill="#65696d"/>
<polygon points="257.0,-6.0 257.0,-3.3 257.0,-0.7 257.0,2.0 257.0,4.7 257.0,7.3 257.0,10.0 277.0,10.0 277.0,7.3 277.0,4.7 277.0,2.0 277.0,-0.7 277.0,-3.3 277.0,-6.0" fill="#65696d"/>
<polygon points="297.0,-6.0 297.0,-3.3 297.0,-0.7 297.0,2.0 297.0,4.7 297.0,7.3 297.0,10.0 317.0,10.0 317.0,7.3 317.0,4.7 317.0,2.0 317.0,-0.7 317.0,-3.3 317.0,-6.0" fill="#65696d"/>
<polygon points="-163.0,10.0 -163.0,12.7 -163.0,15.3 -163.0,18.0 -163.0,20.7 -163.0,23.3 -163.0,26.0 -143.0,26.0 -143.0,23.3 -143.0,20.7 -143.0,18.0 -143.0,15.3 -143.0,12.7 -143.0,10.0" fill="#65696d"/>
<polygon points="-123.0,10.0 -123.0,12.7 -123.0,15.3 -123.0,18.0 -123.0,20.7 -123.0,23.3 -123.0,26.0 -103.0,26.0 -103.0,23.3 -103.0,20.7 -103.0,18.0 -103.0,15.3 -103.0,12.7 -103.0,10.0" fill="#65696d"/>
<polygon points="-83.0,10.0 -83.0,12.7 -83.0,15.3 -83.0,18.0 -83.0,20.7 -83.0,23.3 -83.0,26.0 -63.0,26.0 -63.0,23.3 -63.0,20.7 -63.0,18.0 -63.0,15.3 -63.0,12.7 -63.0,10.0" fill="#65696d"/>
<polygon points="-43.0,10.0 -43.0,12.7 -43.0,15.3 -43.0,18.0 -43.0,20.7 -43.0,23.3 -43.0,26.0 -23.0,26.0 -23.0,23.3 -23.0,20.7 -23.0,18.0 -23.0,15.3 -23.0,12.7 -23.0,10.0" fill="#65696d"/>
<polygon points="-3.0,10.0 -3.0,12.7 -3.0,15.3 -3.0,18.0 -3.0,20.7 -3.0,23.3 -3.0,26.0 17.0,26.0 17.0,23.3 17.0,20.7 17.0,18.0 17.0,15.3 17.0,12.7 17.0,10.0" fill="#65696d"/>
<polygon points="37.0,10.0 37.0,12.7 37.0,15.3 37.0,18.0 37.0,20.7 37.0,23.3 37.0,26.0 57.0,26.0 57.0,23.3 57.0,20.7 57.0,18.0 57.0,15.3 57.0,12.7 57.0,10.0" fill="#65696d"/>
<polygon points="77.0,10.0 77.0,12.7 77.0,15.3 77.0,18.0 77.0,20.7 77.0,23.3 77.0,26.0 97.0,26.0 97.0,23.3 97.0,20.7 97.0,18.0 97.0,15.3 97.0,12.7 97.0,10.0" fill="#65696d"/>
<polygon points="117.0,10.0 117.0,12.7 117.0,15.3 117.0,18.0 117.0,20.7 117.0,23.3 117.0,26.0 137.0,26.0 137.0,23.3 137.0,20.7 137.0,18.0 137.0,15.3 137.0,12.7 137.0,10.0" fill="#65696d"/>
<polygon points="157.0,10.0 157.0,12.7 157.0,15.3 157.0,18.0 157.0,20.7 157.0,23.3 157.0,26.0 177.0,26.0 177.0,23.3 177.0,20.7 177.0,18.0 177.0,15.3 177.0,12.7 177.0,10.0" fill="#65696d"/>
<polygon points="197.0,10.0 197.0,12.7 197.0,15.3 197.0,18.0 197.0,20.7 197.0,23.3 197.0,26.0 217.0,26.0 217.0,23.3 217.0,20.7 217.0,18.0 217.0,15.3 217.0,12.7 217.0,10.0" fill="#65696d"/>
<polygon points="237.0,10.0 237.0,12.7 237.0,15.3 237.0,18.0 237.0,20.7 237.0,23.3 237.0,26.0 257.0,26.0 257.0,23.3 257.0,20.7 257.0,18.0 257.0,15.3 257.0,12.7 257.0,10.0" fill="#65696d"/>
<polygon points="277.0,10.0 277.0,12.7 277.0,15.3 277.0,18.0 277.0,20.7 277.0,23.3 277.0,26.0 297.0,26.0 297.0,23.3 297.0,20.7 297.0,18.0 297.0,15.3 297.0,12.7 297.0,10.0" fill="#65696d"/>
<polygon points="-143.0,26.0 -143.0,28.7 -143.0,31.3 -143.0,34.0 -143.0,36.7 -143.0,39.3 -143.0,42.0 -123.0,42.0 -123.0,39.3 -123.0,36.7 -123.0,34.0 -123.0,31.3 -123.0,28.7 -123.0,26.0" fill="#65696d"/>
<polygon points="-103.0,26.0 -103.0,28.7 -103.0,31.3 -103.0,34.0 -103.0,36.7 -103.0,39.3 -103.0,42.0 -83.0,42.0 -83.0,39.3 -83.0,36.7 -83.0,34.0 -83.0,31.3 -83.0,28.7 -83.0,26.0" fill="#65696d"/>
<polygon points="-63.0,26.0 -63.0,28.7 -63.0,31.3 -63.0,34.0 -63.0,36.7 -63.0,39.3 -63.0,42.0 -43.0,42.0 -43.0,39.3 -43.0,36.7 -43.0,34.0 -43.0,31.3 -43.0,28.7 -43.0,26.0" fill="#65696d"/>
<polygon points="-23.0,26.0 -23.0,28.7 -23.0,31.3 -23.0,34.0 -23.0,36.7 -23.0,39.3 -23.0,42.0 -3.0,42.0 -3.0,39.3 -3.0,36.7 -3.0,34.0 -3.0,31.3 -3.0,28.7 -3.0,26.0" fill="#65696d"/>
<polygon points="17.0,26.0 17.0,28.7 17.0,31.3 17.0,34.0 17.0,36.7 17.0,39.3 17.0,42.0 37.0,42.0 37.0,39.3 37.0,36.7 37.0,34.0 37.0,31.3 37.0,28.7 37.0,26.0" fill="#65696d"/>
<polygon points="57.0,26.0 57.0,28.7 57.0,31.3 57.0,34.0 57.0,36.7 57.0,39.3 57.0,42.0 77.0,42.0 77.0,39.3 77.0,36.7 77.0,34.0 77.0,31.3 77.0,28.7 77.0,26.0" fill="#65696d"/>
<polygon points="97.0,26.0 97.0,28.7 97.0,31.3 97.0,34.0 97.0,36.7 97.0,39.3 97.0,42.0 117.0,42.0 117.0,39.3 117.0,36.7 117.0,34.0 117.0,31.3 117.0,28.7 117.0,26.0" fill="#65696d"/>
<polygon points="137.0,26.0 137.0,28.7 137.0,31.3 137.0,34.0 137.0,36.7 137.0,39.3 137.0,42.0 157.0,42.0 157.0,39.3 157.0,36.7 157.0,34.0 157.0,31.3 157.0,28.7 157.0,26.0" fill="#65696d"/>
<polygon points="177.0,26.0 177.0,28.7 177.0,31.3 177.0,34.0 177.0,36.7 177.0,39.3 177.0,42.0 197.0,42.0 197.0,39.3 197.0,36.7 197.0,34.0 197.0,31.3 197.0,28.7 197.0,26.0" fill="#65696d"/>
<polygon points="217.0,26.0 217.0,28.7 217.0,31.3 217.0,34.0 217.0,36.7 217.0,39.3 217.0,42.0 237.0,42.0 237.0,39.3 237.0,36.7 237.0,34.0 237.0,31.3 237.0,28.7 237.0,26.0" fill="#65696d"/>
<polygon points="257.0,26.0 257.0,28.7 257.0,31.3 257.0,34.0 257.0,36.7 257.0,39.3 257.0,42.0 277.0,42.0 277.0,39.3 277.0,36.7 277.0,34.0 277.0,31.3 277.0,28.7 277.0,26.0" fill="#65696d"/>
<polygon points="297.0,26.0 297.0,28.7 297.0,31.3 297.0,34.0 297.0,36.7 297.0,39.3 297.0,42.0 317.0,42.0 317.0,39.3 317.0,36.7 317.0,34.0 317.0,31.3 317.0,28.7 317.0,26.0" fill="#65696d"/>
<polygon points="-163.0,42.0 -163.0,44.7 -163.0,47.3 -163.0,50.0 -163.0,52.7 -163.0,55.3 -163.2,57.9 -143.2,57.9 -143.0,55.3 -143.0,52.7 -143.0,50.0 -143.0,47.3 -143.0,44.7 -143.0,42.0" fill="#65696d"/>
<polygon points="-123.0,42.0 -123.0,44.7 -123.0,47.3 -123.0,50.0 -123.0,52.7 -123.0,55.3 -123.2,57.9 -103.1,57.9 -103.0,55.3 -103.0,52.7 -103.0,50.0 -103.0,47.3 -103.0,44.7 -103.0,42.0" fill="#65696d"/>
<polygon points="-83.0,42.0 -83.0,44.7 -83.0,47.3 -83.0,50.0 -83.0,52.7 -83.0,55.3 -83.1,57.9 -63.1,57.9 -63.0,55.3 -63.0,52.7 -63.0,50.0 -63.0,47.3 -63.0,44.7 -63.0,42.0" fill="#65696d"/>
<polygon points="-43.0,42.0 -43.0,44.7 -43.0,47.3 -43.0,50.0 -43.0,52.7 -43.0,55.3 -43.1,57.9 -23.1,57.9 -23.0,55.3 -23.0,52.7 -23.0,50.0 -23.0,47.3 -23.0,44.7 -23.0,42.0" fill="#65696d"/>
<polygon points="-3.0,42.0 -3.0,44.7 -3.0,47.3 -3.0,50.0 -3.0,52.7 -3.0,55.3 -3.1,57.9 17.0,57.9 17.0,55.3 17.0,52.7 17.0,50.0 17.0,47.3 17.0,44.7 17.0,42.0" fill="#65696d"/>
<polygon points="37.0,42.0 37.0,44.7 37.0,47.3 37.0,50.0 37.0,52.7 37.0,55.3 37.0,57.9 57.0,57.9 57.0,55.3 57.0,52.7 57.0,50.0 57.0,47.3 57.0,44.7 57.0,42.0" fill="#65696d"/>
<polygon points="77.0,42.0 77.0,44.7 77.0,47.3 77.0,50.0 77.0,52.7 77.0,55.3 77.0,57.9 97.0,57.9 97.0,55.3 97.0,52.7 97.0,50.0 97.0,47.3 97.0,44.7 97.0,42.0" fill="#65696d"/>
<polygon points="117.0,42.0 117.0,44.7 117.0,47.3 117.0,50.0 117.0,52.7 117.0,55.3 117.0,57.9 137.1,57.9 137.0,55.3 137.0,52.7 137.0,50.0 137.0,47.3 137.0,44.7 137.0,42.0" fill="#65696d"/>
<polygon points="157.0,42.0 157.0,44.7 157.0,47.3 157.0,50.0 157.0,52.7 157.0,55.3 157.1,57.9 177.1,57.9 177.0,55.3 177.0,52.7 177.0,50.0 177.0,47.3 177.0,44.7 177.0,42.0" fill="#65696d"/>
<polygon points="197.0,42.0 197.0,44.7 197.0,47.3 197.0,50.0 197.0,52.7 197.0,55.3 197.1,57.9 217.1,57.9 217.0,55.3 217.0,52.7 217.0,50.0 217.0,47.3 217.0,44.7 217.0,42.0" fill="#65696d"/>
<polygon points="237.0,42.0 237.0,44.7 237.0,47.3 237.0,50.0 237.0,52.7 237.0,55.3 237.1,57.9 257.1,57.9 257.0,55.3 257.0,52.7 257.0,50.0 257.0,47.3 257.0,44.7 257.0,42.0" fill="#65696d"/>
<polygon points="277.0,42.0 277.0,44.7 277.0,47.3 277.0,50.0 277.0,52.7 277.0,55.3 277.2,57.9 297.2,57.9 297.0,55.3 297.0,52.7 297.0,50.0 297.0,47.3 297.0,44.7 297.0,42.0" fill="#65696d"/>
<polygon points="-143.2,57.9 -143.4,60.5 -143.8,63.1 -144.2,65.6 -144.8,68.1 -145.4,70.5 -146.2,73.0 -125.9,73.0 -125.2,70.5 -124.6,68.1 -124.1,65.6 -123.7,63.1 -123.4,60.5 -123.2,57.9" fill="#65696d"/>
<polygon points="-103.1,57.9 -103.3,60.5 -103.6,63.1 -104.0,65.6 -104.4,68.1 -105.0,70.5 -105.6,73.0 -85.3,73.0 -84.8,70.5 -84.3,68.1 -83.9,65.6 -83.6,63.1 -83.3,60.5 -83.1,57.9" fill="#65696d"/>
<polygon points="-63.1,57.9 -63.3,60.5 -63.5,63.1 -63.8,65.6 -64.1,68.1 -64.5,70.5 -65.0,73.0 -44.7,73.0 -44.3,70.5 -44.0,68.1 -43.7,65.6 -43.4,63.1 -43.2,60.5 -43.1,57.9" fill="#65696d"/>
<polygon points="-23.1,57.9 -23.2,60.5 -23.3,63.1 -23.5,65.6 -23.8,68.1 -24.1,70.5 -24.4,73.0 -4.1,73.0 -3.9,70.5 -3.6,68.1 -3.4,65.6 -3.3,63.1 -3.2,60.5 -3.1,57.9" fill="#65696d"/>
<polygon points="17.0,57.9 16.9,60.5 16.8,63.1 16.7,65.6 16.5,68.1 16.4,70.5 16.2,73.0 36.4,73.0 36.6,70.5 36.7,68.1 36.8,65.6 36.9,63.1 36.9,60.5 37.0,57.9" fill="#65696d"/>
<polygon points="57.0,57.9 57.0,60.5 56.9,63.1 56.9,65.6 56.9,68.1 56.8,70.5 56.7,73.0 77.0,73.0 77.0,70.5 77.0,68.1 77.0,65.6 77.0,63.1 77.0,60.5 77.0,57.9" fill="#65696d"/>
<polygon points="97.0,57.9 97.0,60.5 97.1,63.1 97.1,65.6 97.2,68.1 97.2,70.5 97.3,73.0 117.6,73.0 117.5,70.5 117.3,68.1 117.2,65.6 117.1,63.1 117.1,60.5 117.0,57.9" fill="#65696d"/>
<polygon points="137.1,57.9 137.1,60.5 137.2,63.1 137.3,65.6 137.5,68.1 137.7,70.5 137.9,73.0 158.2,73.0 157.9,70.5 157.7,68.1 157.5,65.6 157.3,63.1 157.2,60.5 157.1,57.9" fill="#65696d"/>
<polygon points="177.1,57.9 177.2,60.5 177.4,63.1 177.6,65.6 177.8,68.1 178.1,70.5 178.5,73.0 198.8,73.0 198.4,70.5 198.0,68.1 197.7,65.6 197.4,63.1 197.2,60.5 197.1,57.9" fill="#65696d"/>
<polygon points="217.1,57.9 217.3,60.5 217.5,63.1 217.8,65.6 218.2,68.1 218.6,70.5 219.1,73.0 239.4,73.0 238.8,70.5 238.3,68.1 237.9,65.6 237.6,63.1 237.3,60.5 237.1,57.9" fill="#65696d"/>
<polygon points="257.1,57.9 257.4,60.5 257.6,63.1 258.0,65.6 258.5,68.1 259.0,70.5 259.7,73.0 280.0,73.0 279.2,70.5 278.6,68.1 278.1,65.6 277.7,63.1 277.4,60.5 277.2,57.9" fill="#65696d"/>
<polygon points="297.2,57.9 297.4,60.5 297.8,63.1 298.2,65.6 298.8,68.1 299.5,70.5 300.2,73.0 320.5,73.0 319.7,70.5 319.0,68.1 318.3,65.6 317.9,63.1 317.5,60.5 317.2,57.9" fill="#65696d"/>
<polygon points="-166.5,73.0 -167.4,75.4 -168.5,77.7 -169.7,80.1 -171.0,82.4 -172.4,84.6 -174.0,86.9 -153.1,86.9 -151.7,84.6 -150.3,82.4 -149.1,80.1 -148.0,77.7 -147.1,75.4 -146.2,73.0" fill="#65696d"/>
<polygon points="-125.9,73.0 -126.7,75.4 -127.6,77.7 -128.6,80.1 -129.7,82.4 -130.9,84.6 -132.2,86.9 -111.2,86.9 -110.1,84.6 -109.0,82.4 -108.0,80.1 -107.1,77.7 -106.3,75.4 -105.6,73.0" fill="#65696d"/>
<polygon points="-85.3,73.0 -85.9,75.4 -86.7,77.7 -87.4,80.1 -88.3,82.4 -89.3,84.6 -90.3,86.9 -69.4,86.9 -68.5,84.6 -67.6,82.4 -66.9,80.1 -66.2,77.7 -65.6,75.4 -65.0,73.0" fill="#65696d"/>
<polygon points="-44.7,73.0 -45.2,75.4 -45.7,77.7 -46.3,80.1 -47.0,82.4 -47.7,84.6 -48.5,86.9 -27.5,86.9 -26.9,84.6 -26.3,82.4 -25.8,80.1 -25.3,77.7 -24.8,75.4 -24.4,73.0" fill="#65696d"/>
<polygon points="-4.1,73.0 -4.5,75.4 -4.8,77.7 -5.2,80.1 -5.6,82.4 -6.1,84.6 -6.6,86.9 14.3,86.9 14.7,84.6 15.0,82.4 15.4,80.1 15.7,77.7 15.9,75.4 16.2,73.0" fill="#65696d"/>
<polygon points="36.4,73.0 36.3,75.4 36.1,77.7 35.9,80.1 35.7,82.4 35.5,84.6 35.2,86.9 56.2,86.9 56.3,84.6 56.4,82.4 56.5,80.1 56.6,77.7 56.7,75.4 56.7,73.0" fill="#65696d"/>
<polygon points="77.0,73.0 77.0,75.4 77.0,77.7 77.1,80.1 77.1,82.4 77.1,84.6 77.1,86.9 98.0,86.9 97.9,84.6 97.7,82.4 97.6,80.1 97.5,77.7 97.4,75.4 97.3,73.0" fill="#65696d"/>
<polygon points="117.6,73.0 117.8,75.4 118.0,77.7 118.2,80.1 118.4,82.4 118.7,84.6 118.9,86.9 139.9,86.9 139.5,84.6 139.1,82.4 138.7,80.1 138.4,77.7 138.2,75.4 137.9,73.0" fill="#65696d"/>
<polygon points="158.2,73.0 158.5,75.4 158.9,77.7 159.3,80.1 159.8,82.4 160.3,84.6 160.8,86.9 181.7,86.9 181.0,84.6 180.4,82.4 179.9,80.1 179.4,77.7 178.9,75.4 178.5,73.0" fill="#65696d"/>
<polygon points="198.8,73.0 199.3,75.4 199.8,77.7 200.4,80.1 201.1,82.4 201.8,84.6 202.6,86.9 223.6,86.9 222.6,84.6 221.8,82.4 221.0,80.1 220.3,77.7 219.6,75.4 219.1,73.0" fill="#65696d"/>
<polygon points="239.4,73.0 240.0,75.4 240.7,77.7 241.6,80.1 242.5,82.4 243.4,84.6 244.5,86.9 265.4,86.9 264.2,84.6 263.1,82.4 262.1,80.1 261.2,77.7 260.4,75.4 259.7,73.0" fill="#65696d"/>
<polygon points="280.0,73.0 280.8,75.4 281.7,77.7 282.7,80.1 283.8,82.4 285.0,84.6 286.3,86.9 307.3,86.9 305.8,84.6 304.5,82.4 303.2,80.1 302.1,77.7 301.1,75.4 300.2,73.0" fill="#65696d"/>
<polygon points="-153.1,86.9 -154.6,89.1 -156.3,91.3 -158.1,93.4 -160.1,95.5 -162.1,97.6 -164.3,99.7 -142.4,99.7 -140.4,97.6 -138.5,95.5 -136.7,93.4 -135.1,91.3 -133.6,89.1 -132.2,86.9" fill="#65696d"/>
<polygon points="-111.2,86.9 -112.5,89.1 -113.9,91.3 -115.3,93.4 -116.9,95.5 -118.6,97.6 -120.4,99.7 -98.4,99.7 -96.9,97.6 -95.4,95.5 -94.0,93.4 -92.7,91.3 -91.4,89.1 -90.3,86.9" fill="#65696d"/>
<polygon points="-69.4,86.9 -70.4,89.1 -71.4,91.3 -72.6,93.4 -73.8,95.5 -75.1,97.6 -76.5,99.7 -54.5,99.7 -53.3,97.6 -52.2,95.5 -51.2,93.4 -50.2,91.3 -49.3,89.1 -48.5,86.9" fill="#65696d"/>
<polygon points="-27.5,86.9 -28.2,89.1 -29.0,91.3 -29.8,93.4 -30.7,95.5 -31.6,97.6 -32.6,99.7 -10.6,99.7 -9.8,97.6 -9.1,95.5 -8.4,93.4 -7.8,91.3 -7.2,89.1 -6.6,86.9" fill="#65696d"/>
<polygon points="14.3,86.9 13.9,89.1 13.5,91.3 13.0,93.4 12.5,95.5 11.9,97.6 11.3,99.7 33.3,99.7 33.7,97.6 34.0,95.5 34.4,93.4 34.7,91.3 35.0,89.1 35.2,86.9" fill="#65696d"/>
<polygon points="56.2,86.9 56.0,89.1 55.9,91.3 55.8,93.4 55.6,95.5 55.4,97.6 55.2,99.7 77.2,99.7 77.2,97.6 77.2,95.5 77.1,93.4 77.1,91.3 77.1,89.1 77.1,86.9" fill="#65696d"/>
<polygon points="98.0,86.9 98.2,89.1 98.3,91.3 98.5,93.4 98.7,95.5 98.9,97.6 99.2,99.7 121.1,99.7 120.7,97.6 120.3,95.5 119.9,93.4 119.6,91.3 119.2,89.1 118.9,86.9" fill="#65696d"/>
<polygon points="139.9,86.9 140.3,89.1 140.8,91.3 141.3,93.4 141.9,95.5 142.4,97.6 143.1,99.7 165.0,99.7 164.2,97.6 163.4,95.5 162.7,93.4 162.0,91.3 161.4,89.1 160.8,86.9" fill="#65696d"/>
<polygon points="181.7,86.9 182.4,89.1 183.2,91.3 184.1,93.4 185.0,95.5 185.9,97.6 187.0,99.7 208.9,99.7 207.7,97.6 206.5,95.5 205.5,93.4 204.5,91.3 203.5,89.1 202.6,86.9" fill="#65696d"/>
<polygon points="223.6,86.9 224.6,89.1 225.7,91.3 226.9,93.4 228.1,95.5 229.5,97.6 230.9,99.7 252.8,99.7 251.2,97.6 249.7,95.5 248.2,93.4 246.9,91.3 245.7,89.1 244.5,86.9" fill="#65696d"/>
<polygon points="265.4,86.9 266.7,89.1 268.1,91.3 269.6,93.4 271.2,95.5 273.0,97.6 274.8,99.7 296.8,99.7 294.7,97.6 292.8,95.5 291.0,93.4 289.3,91.3 287.8,89.1 286.3,86.9" fill="#65696d"/>
<polygon points="307.3,86.9 308.9,89.1 310.6,91.3 312.4,93.4 314.4,95.5 316.5,97.6 318.7,99.7 340.7,99.7 338.2,97.6 335.9,95.5 333.8,93.4 331.8,91.3 329.9,89.1 328.2,86.9" fill="#65696d"/>
<polygon points="-186.3,99.7 -188.8,101.7 -191.5,103.7 -194.4,105.7 -197.5,107.6 -200.7,109.5 -204.1,111.3 -180.6,111.3 -177.5,109.5 -174.6,107.6 -171.8,105.7 -169.1,103.7 -166.7,101.7 -164.3,99.7" fill="#65696d"/>
<polygon points="-142.4,99.7 -144.5,101.7 -146.7,103.7 -149.1,105.7 -151.7,107.6 -154.3,109.5 -157.2,111.3 -133.7,111.3 -131.2,109.5 -128.8,107.6 -126.5,105.7 -124.3,103.7 -122.3,101.7 -120.4,99.7" fill="#65696d"/>
<polygon points="-98.4,99.7 -100.1,101.7 -101.9,103.7 -103.9,105.7 -105.9,107.6 -108.0,109.5 -110.3,111.3 -86.8,111.3 -84.8,109.5 -83.0,107.6 -81.2,105.7 -79.5,103.7 -78.0,101.7 -76.5,99.7" fill="#65696d"/>
<polygon points="-54.5,99.7 -55.8,101.7 -57.1,103.7 -58.6,105.7 -60.1,107.6 -61.7,109.5 -63.4,111.3 -39.9,111.3 -38.5,109.5 -37.2,107.6 -35.9,105.7 -34.7,103.7 -33.6,101.7 -32.6,99.7" fill="#65696d"/>
<polygon points="-10.6,99.7 -11.5,101.7 -12.4,103.7 -13.3,105.7 -14.3,107.6 -15.3,109.5 -16.5,111.3 7.0,111.3 7.8,109.5 8.6,107.6 9.3,105.7 10.0,103.7 10.7,101.7 11.3,99.7" fill="#65696d"/>
<polygon points="33.3,99.7 32.9,101.7 32.4,103.7 32.0,105.7 31.5,107.6 31.0,109.5 30.4,111.3 53.9,111.3 54.2,109.5 54.4,107.6 54.6,105.7 54.8,103.7 55.0,101.7 55.2,99.7" fill="#65696d"/>
<polygon points="77.2,99.7 77.2,101.7 77.2,103.7 77.3,105.7 77.3,107.6 77.3,109.5 77.3,111.3 100.8,111.3 100.5,109.5 100.2,107.6 99.9,105.7 99.6,103.7 99.4,101.7 99.2,99.7" fill="#65696d"/>
<polygon points="121.1,99.7 121.6,101.7 122.0,103.7 122.5,105.7 123.1,107.6 123.6,109.5 124.2,111.3 147.7,111.3 146.8,109.5 146.0,107.6 145.2,105.7 144.4,103.7 143.7,101.7 143.1,99.7" fill="#65696d"/>
<polygon points="165.0,99.7 165.9,101.7 166.8,103.7 167.8,105.7 168.9,107.6 170.0,109.5 171.1,111.3 194.6,111.3 193.1,109.5 191.8,107.6 190.5,105.7 189.2,103.7 188.1,101.7 187.0,99.7" fill="#65696d"/>
<polygon points="208.9,99.7 210.2,101.7 211.6,103.7 213.1,105.7 214.7,107.6 216.3,109.5 218.0,111.3 241.5,111.3 239.5,109.5 237.6,107.6 235.7,105.7 234.0,103.7 232.4,101.7 230.9,99.7" fill="#65696d"/>
<polygon points="252.8,99.7 254.6,101.7 256.4,103.7 258.4,105.7 260.4,107.6 262.6,109.5 264.9,111.3 288.4,111.3 285.8,109.5 283.3,107.6 281.0,105.7 278.8,103.7 276.7,101.7 274.8,99.7" fill="#65696d"/>
<polygon points="296.8,99.7 298.9,101.7 301.2,103.7 303.7,105.7 306.2,107.6 309.0,109.5 311.9,111.3 335.3,111.3 332.1,109.5 329.1,107.6 326.3,105.7 323.6,103.7 321.1,101.7 318.7,99.7" fill="#65696d"/>
<polygon points="-180.6,111.3 -183.9,113.1 -187.4,114.9 -191.0,116.6 -194.8,118.3 -198.9,119.9 -203.1,121.5 -177.6,121.5 -173.7,119.9 -170.1,118.3 -166.6,116.6 -163.3,114.9 -160.1,113.1 -157.2,111.3" fill="#65696d"/>
<polygon points="-133.7,111.3 -136.4,113.1 -139.2,114.9 -142.2,116.6 -145.3,118.3 -148.6,119.9 -152.1,121.5 -126.6,121.5 -123.5,119.9 -120.6,118.3 -117.8,116.6 -115.1,114.9 -112.6,113.1 -110.3,111.3" fill="#65696d"/>
<polygon points="-86.8,111.3 -88.9,113.1 -91.1,114.9 -93.4,116.6 -95.8,118.3 -98.4,119.9 -101.0,121.5 -75.5,121.5 -73.2,119.9 -71.1,118.3 -69.0,116.6 -67.0,114.9 -65.1,113.1 -63.4,111.3" fill="#65696d"/>
<polygon points="-39.9,111.3 -41.4,113.1 -42.9,114.9 -44.6,116.6 -46.3,118.3 -48.1,119.9 -50.0,121.5 -24.5,121.5 -23.0,119.9 -21.5,118.3 -20.2,116.6 -18.9,114.9 -17.6,113.1 -16.5,111.3" fill="#65696d"/>
<polygon points="7.0,111.3 6.1,113.1 5.2,114.9 4.2,116.6 3.2,118.3 2.1,119.9 1.0,121.5 26.5,121.5 27.3,119.9 28.0,118.3 28.6,116.6 29.3,114.9 29.9,113.1 30.4,111.3" fill="#65696d"/>
<polygon points="53.9,111.3 53.6,113.1 53.3,114.9 53.0,116.6 52.7,118.3 52.4,119.9 52.0,121.5 77.6,121.5 77.5,119.9 77.5,118.3 77.4,116.6 77.4,114.9 77.4,113.1 77.3,111.3" fill="#65696d"/>
<polygon points="100.8,111.3 101.1,113.1 101.5,114.9 101.8,116.6 102.2,118.3 102.6,119.9 103.1,121.5 128.6,121.5 127.8,119.9 127.0,118.3 126.2,116.6 125.5,114.9 124.9,113.1 124.2,111.3" fill="#65696d"/>
<polygon points="147.7,111.3 148.6,113.1 149.6,114.9 150.6,116.6 151.7,118.3 152.9,119.9 154.1,121.5 179.6,121.5 178.0,119.9 176.5,118.3 175.1,116.6 173.7,114.9 172.4,113.1 171.1,111.3" fill="#65696d"/>
<polygon points="194.6,111.3 196.1,113.1 197.8,114.9 199.5,116.6 201.3,118.3 203.1,119.9 205.1,121.5 230.6,121.5 228.3,119.9 226.0,118.3 223.9,116.6 221.8,114.9 219.9,113.1 218.0,111.3" fill="#65696d"/>
<polygon points="241.5,111.3 243.6,113.1 245.9,114.9 248.3,116.6 250.8,118.3 253.4,119.9 256.2,121.5 281.7,121.5 278.5,119.9 275.5,118.3 272.7,116.6 270.0,114.9 267.4,113.1 264.9,111.3" fill="#65696d"/>
<polygon points="288.4,111.3 291.1,113.1 294.0,114.9 297.1,116.6 300.3,118.3 303.6,119.9 307.2,121.5 332.7,121.5 328.8,119.9 325.0,118.3 321.5,116.6 318.1,114.9 314.9,113.1 311.9,111.3" fill="#65696d"/>
<polygon points="335.3,111.3 338.6,113.1 342.2,114.9 345.9,116.6 349.8,118.3 353.9,119.9 358.2,121.5 383.7,121.5 379.0,119.9 374.5,118.3 370.3,116.6 366.2,114.9 362.4,113.1 358.8,111.3" fill="#65696d"/>
<polygon points="-228.6,121.5 -233.5,123.0 -238.6,124.5 -244.0,125.9 -249.6,127.2 -255.6,128.5 -261.8,129.7 -233.5,129.7 -227.8,128.5 -222.3,127.2 -217.2,125.9 -212.3,124.5 -207.6,123.0 -203.1,121.5" fill="#65696d"/>
<polygon points="-177.6,121.5 -181.6,123.0 -185.9,124.5 -190.4,125.9 -195.1,127.2 -200.0,128.5 -205.2,129.7 -176.9,129.7 -172.2,128.5 -167.8,127.2 -163.6,125.9 -159.5,124.5 -155.7,123.0 -152.1,121.5" fill="#65696d"/>
<polygon points="-126.6,121.5 -129.8,123.0 -133.2,124.5 -136.8,125.9 -140.5,127.2 -144.4,128.5 -148.6,129.7 -120.3,129.7 -116.7,128.5 -113.2,127.2 -110.0,125.9 -106.8,124.5 -103.9,123.0 -101.0,121.5" fill="#65696d"/>
<polygon points="-75.5,121.5 -77.9,123.0 -80.5,124.5 -83.2,125.9 -85.9,127.2 -88.9,128.5 -92.0,129.7 -63.7,129.7 -61.1,128.5 -58.7,127.2 -56.3,125.9 -54.1,124.5 -52.0,123.0 -50.0,121.5" fill="#65696d"/>
<polygon points="-24.5,121.5 -26.1,123.0 -27.8,124.5 -29.5,125.9 -31.4,127.2 -33.3,128.5 -35.4,129.7 -7.1,129.7 -5.6,128.5 -4.1,127.2 -2.7,125.9 -1.4,124.5 -0.2,123.0 1.0,121.5" fill="#65696d"/>
<polygon points="26.5,121.5 25.7,123.0 24.9,124.5 24.1,125.9 23.2,127.2 22.2,128.5 21.2,129.7 49.5,129.7 50.0,128.5 50.4,127.2 50.9,125.9 51.3,124.5 51.7,123.0 52.0,121.5" fill="#65696d"/>
<polygon points="77.6,121.5 77.6,123.0 77.6,124.5 77.7,125.9 77.7,127.2 77.8,128.5 77.8,129.7 106.1,129.7 105.6,128.5 105.0,127.2 104.5,125.9 104.0,124.5 103.5,123.0 103.1,121.5" fill="#65696d"/>
<polygon points="128.6,121.5 129.4,123.0 130.3,124.5 131.3,125.9 132.3,127.2 133.3,128.5 134.4,129.7 162.7,129.7 161.1,128.5 159.6,127.2 158.1,125.9 156.7,124.5 155.4,123.0 154.1,121.5" fill="#65696d"/>
<polygon points="179.6,121.5 181.3,123.0 183.0,124.5 184.9,125.9 186.8,127.2 188.9,128.5 191.0,129.7 219.3,129.7 216.7,128.5 214.1,127.2 211.7,125.9 209.4,124.5 207.2,123.0 205.1,121.5" fill="#65696d"/>
<polygon points="230.6,121.5 233.1,123.0 235.8,124.5 238.5,125.9 241.4,127.2 244.4,128.5 247.6,129.7 275.9,129.7 272.2,128.5 268.7,127.2 265.3,125.9 262.1,124.5 259.1,123.0 256.2,121.5" fill="#65696d"/>
<polygon points="281.7,121.5 285.0,123.0 288.5,124.5 292.1,125.9 296.0,127.2 300.0,128.5 304.2,129.7 332.5,129.7 327.8,128.5 323.2,127.2 318.9,125.9 314.8,124.5 310.9,123.0 307.2,121.5" fill="#65696d"/>
<polygon points="332.7,121.5 336.8,123.0 341.2,124.5 345.7,125.9 350.5,127.2 355.6,128.5 360.8,129.7 389.1,129.7 383.3,128.5 377.8,127.2 372.5,125.9 367.5,124.5 362.8,123.0 358.2,121.5" fill="#65696d"/>
<polygon points="-233.5,129.7 -239.5,130.9 -245.7,131.9 -252.3,132.9 -259.2,133.8 -266.5,134.6 -274.1,135.3 -242.1,135.3 -235.2,134.6 -228.6,133.8 -222.3,132.9 -216.3,131.9 -210.6,130.9 -205.2,129.7" fill="#65696d"/>
<polygon points="-176.9,129.7 -181.8,130.9 -186.9,131.9 -192.3,132.9 -197.9,133.8 -203.8,134.6 -210.0,135.3 -178.0,135.3 -172.5,134.6 -167.2,133.8 -162.2,132.9 -157.5,131.9 -152.9,130.9 -148.6,129.7" fill="#65696d"/>
<polygon points="-120.3,129.7 -124.1,130.9 -128.0,131.9 -132.2,132.9 -136.6,133.8 -141.2,134.6 -146.0,135.3 -114.0,135.3 -109.8,134.6 -105.9,133.8 -102.2,132.9 -98.6,131.9 -95.2,130.9 -92.0,129.7" fill="#65696d"/>
<polygon points="-63.7,129.7 -66.4,130.9 -69.2,131.9 -72.1,132.9 -75.3,133.8 -78.5,134.6 -81.9,135.3 -49.9,135.3 -47.2,134.6 -44.6,133.8 -42.1,132.9 -39.8,131.9 -37.5,130.9 -35.4,129.7" fill="#65696d"/>
<polygon points="-7.1,129.7 -8.7,130.9 -10.3,131.9 -12.1,132.9 -13.9,133.8 -15.9,134.6 -17.9,135.3 14.1,135.3 15.5,134.6 16.7,133.8 17.9,132.9 19.1,131.9 20.2,130.9 21.2,129.7" fill="#65696d"/>
<polygon points="49.5,129.7 49.0,130.9 48.5,131.9 48.0,132.9 47.4,133.8 46.8,134.6 46.2,135.3 78.2,135.3 78.1,134.6 78.1,133.8 78.0,132.9 77.9,131.9 77.9,130.9 77.8,129.7" fill="#65696d"/>
<polygon points="106.1,129.7 106.7,130.9 107.4,131.9 108.0,132.9 108.7,133.8 109.5,134.6 110.2,135.3 142.3,135.3 140.8,134.6 139.4,133.8 138.1,132.9 136.8,131.9 135.6,130.9 134.4,129.7" fill="#65696d"/>
<polygon points="162.7,129.7 164.4,130.9 166.2,131.9 168.1,132.9 170.1,133.8 172.1,134.6 174.3,135.3 206.3,135.3 203.4,134.6 200.7,133.8 198.1,132.9 195.6,131.9 193.3,130.9 191.0,129.7" fill="#65696d"/>
<polygon points="219.3,129.7 222.1,130.9 225.1,131.9 228.1,132.9 231.4,133.8 234.8,134.6 238.3,135.3 270.4,135.3 266.1,134.6 262.0,133.8 258.2,132.9 254.5,131.9 251.0,130.9 247.6,129.7" fill="#65696d"/>
<polygon points="275.9,129.7 279.8,130.9 283.9,131.9 288.2,132.9 292.7,133.8 297.4,134.6 302.4,135.3 334.4,135.3 328.8,134.6 323.4,133.8 318.2,132.9 313.3,131.9 308.7,130.9 304.2,129.7" fill="#65696d"/>
<polygon points="332.5,129.7 337.5,130.9 342.8,131.9 348.3,132.9 354.0,133.8 360.1,134.6 366.5,135.3 398.5,135.3 391.4,134.6 384.7,133.8 378.3,132.9 372.2,131.9 366.4,130.9 360.8,129.7" fill="#65696d"/>
<polygon points="389.1,129.7 395.2,130.9 401.6,131.9 408.3,132.9 415.4,133.8 422.8,134.6 430.5,135.3 462.5,135.3 454.1,134.6 446.0,133.8 438.4,132.9 431.0,131.9 424.1,130.9 417.4,129.7" fill="#65696d"/>
<polygon points="-306.1,135.3 -314.9,135.8 -324.0,136.3 -333.6,136.6 -343.7,136.8 -354.3,137.0 -365.5,137.3 -328.5,137.3 -318.2,137.0 -308.5,136.8 -299.3,136.6 -290.5,136.3 -282.1,135.8 -274.1,135.3" fill="#65696d"/>
<polygon points="-242.1,135.3 -249.3,135.8 -257.0,136.3 -264.9,136.6 -273.3,136.8 -282.2,137.0 -291.4,137.3 -254.4,137.3 -246.1,137.0 -238.2,136.8 -230.6,136.6 -223.4,136.3 -216.6,135.8 -210.0,135.3" fill="#65696d"/>
<polygon points="-178.0,135.3 -183.8,135.8 -189.9,136.3 -196.3,136.6 -203.0,136.8 -210.0,137.0 -217.4,137.3 -180.4,137.3 -173.9,137.0 -167.8,136.8 -161.9,136.6 -156.4,136.3 -151.1,135.8 -146.0,135.3" fill="#65696d"/>
<polygon points="-114.0,135.3 -118.3,135.8 -122.8,136.3 -127.6,136.6 -132.6,136.8 -137.9,137.0 -143.4,137.3 -106.4,137.3 -101.8,137.0 -97.4,136.8 -93.3,136.6 -89.3,136.3 -85.5,135.8 -81.9,135.3" fill="#65696d"/>
<polygon points="-49.9,135.3 -52.8,135.8 -55.8,136.3 -58.9,136.6 -62.2,136.8 -65.7,137.0 -69.4,137.3 -32.3,137.3 -29.6,137.0 -27.0,136.8 -24.6,136.6 -22.2,136.3 -20.0,135.8 -17.9,135.3" fill="#65696d"/>
<polygon points="14.1,135.3 12.8,135.8 11.3,136.3 9.8,136.6 8.1,136.8 6.5,137.0 4.7,137.3 41.7,137.3 42.5,137.0 43.3,136.8 44.1,136.6 44.8,136.3 45.5,135.8 46.2,135.3" fill="#65696d"/>
<polygon points="78.2,135.3 78.3,135.8 78.4,136.3 78.4,136.6 78.5,136.8 78.6,137.0 78.7,137.3 115.7,137.3 114.7,137.0 113.7,136.8 112.8,136.6 111.9,136.3 111.0,135.8 110.2,135.3" fill="#65696d"/>
<polygon points="142.3,135.3 143.8,135.8 145.4,136.3 147.1,136.6 148.9,136.8 150.8,137.0 152.7,137.3 189.7,137.3 186.8,137.0 184.1,136.8 181.4,136.6 178.9,136.3 176.6,135.8 174.3,135.3" fill="#65696d"/>
<polygon points="206.3,135.3 209.3,135.8 212.5,136.3 215.8,136.6 219.3,136.8 222.9,137.0 226.8,137.3 263.8,137.3 259.0,137.0 254.4,136.8 250.1,136.6 246.0,136.3 242.1,135.8 238.3,135.3" fill="#65696d"/>
<polygon points="270.4,135.3 274.8,135.8 279.5,136.3 284.5,136.6 289.6,136.8 295.1,137.0 300.8,137.3 337.8,137.3 331.1,137.0 324.8,136.8 318.8,136.6 313.1,136.3 307.6,135.8 302.4,135.3" fill="#65696d"/>
<polygon points="334.4,135.3 340.4,135.8 346.6,136.3 353.1,136.6 360.0,136.8 367.2,137.0 374.8,137.3 411.8,137.3 403.3,137.0 395.2,136.8 387.5,136.6 380.1,136.3 373.1,135.8 366.5,135.3" fill="#65696d"/>
<polygon points="398.5,135.3 405.9,135.8 413.7,136.3 421.8,136.6 430.4,136.8 439.4,137.0 448.8,137.3 485.9,137.3 475.5,137.0 465.6,136.8 456.2,136.6 447.2,136.3 438.6,135.8 430.5,135.3" fill="#65696d"/>
<polygon points="-328.5,137.3 -339.2,137.5 -350.6,137.8 -362.5,138.0 -375.2,138.3 -388.7,138.6 -402.9,139.0 -359.1,139.0 -346.1,138.6 -333.9,138.3 -322.4,138.0 -311.5,137.8 -301.2,137.5 -291.4,137.3" fill="#65696d"/>
<polygon points="-254.4,137.3 -263.2,137.5 -272.5,137.8 -282.3,138.0 -292.6,138.3 -303.6,138.6 -315.2,139.0 -271.4,139.0 -261.1,138.6 -251.3,138.3 -242.1,138.0 -233.4,137.8 -225.2,137.5 -217.4,137.3" fill="#65696d"/>
<polygon points="-180.4,137.3 -187.2,137.5 -194.4,137.8 -202.0,138.0 -210.0,138.3 -218.5,138.6 -227.5,139.0 -183.7,139.0 -176.0,138.6 -168.7,138.3 -161.8,138.0 -155.3,137.8 -149.2,137.5 -143.4,137.3" fill="#65696d"/>
<polygon points="-106.4,137.3 -111.2,137.5 -116.3,137.8 -121.7,138.0 -127.4,138.3 -133.4,138.6 -139.9,139.0 -96.0,139.0 -90.9,138.6 -86.1,138.3 -81.6,138.0 -77.3,137.8 -73.2,137.5 -69.4,137.3" fill="#65696d"/>
<polygon points="-32.3,137.3 -35.2,137.5 -38.2,137.8 -41.4,138.0 -44.8,138.3 -48.4,138.6 -52.2,139.0 -8.3,139.0 -5.8,138.6 -3.5,138.3 -1.3,138.0 0.8,137.8 2.8,137.5 4.7,137.3" fill="#65696d"/>
<polygon points="41.7,137.3 40.8,137.5 39.9,137.8 38.9,138.0 37.8,138.3 36.7,138.6 35.5,139.0 79.4,139.0 79.3,138.6 79.1,138.3 79.0,138.0 78.9,137.8 78.8,137.5 78.7,137.3" fill="#65696d"/>
<polygon points="115.7,137.3 116.8,137.5 117.9,137.8 119.2,138.0 120.4,138.3 121.8,138.6 123.2,139.0 167.1,139.0 164.3,138.6 161.7,138.3 159.3,138.0 157.0,137.8 154.8,137.5 152.7,137.3" fill="#65696d"/>
<polygon points="189.7,137.3 192.8,137.5 196.0,137.8 199.4,138.0 203.0,138.3 206.9,138.6 210.9,139.0 254.8,139.0 249.4,138.6 244.4,138.3 239.6,138.0 235.1,137.8 230.8,137.5 226.8,137.3" fill="#65696d"/>
<polygon points="263.8,137.3 268.8,137.5 274.1,137.8 279.7,138.0 285.7,138.3 291.9,138.6 298.6,139.0 342.5,139.0 334.5,138.6 327.0,138.3 319.9,138.0 313.2,137.8 306.8,137.5 300.8,137.3" fill="#65696d"/>
<polygon points="337.8,137.3 344.8,137.5 352.2,137.8 360.0,138.0 368.3,138.3 377.0,138.6 386.3,139.0 430.2,139.0 419.6,138.6 409.6,138.3 400.2,138.0 391.2,137.8 382.8,137.5 374.8,137.3" fill="#65696d"/>
<polygon points="411.8,137.3 420.8,137.5 430.3,137.8 440.3,138.0 450.9,138.3 462.1,138.6 474.0,139.0 517.9,139.0 504.6,138.6 492.2,138.3 480.4,138.0 469.3,137.8 458.8,137.5 448.8,137.3" fill="#65696d"/>
<polygon points="485.9,137.3 496.8,137.5 508.4,137.8 520.6,138.0 533.5,138.3 547.2,138.6 561.7,139.0 605.6,139.0 589.7,138.6 574.8,138.3 560.7,138.0 547.4,137.8 534.8,137.5 522.9,137.3" fill="#65696d"/>
<polygon points="-446.8,139.0 -463.4,139.3 -481.0,139.7 -499.9,140.1 -520.0,140.5 -541.7,141.0 -564.9,141.4 -511.2,141.4 -489.8,141.0 -470.0,140.5 -451.5,140.1 -434.3,139.7 -418.1,139.3 -402.9,139.0" fill="#65696d"/>
<polygon points="-359.1,139.0 -372.9,139.3 -387.6,139.7 -403.2,140.1 -420.0,140.5 -438.0,141.0 -457.4,141.4 -403.6,141.4 -386.2,141.0 -370.0,140.5 -354.9,140.1 -340.8,139.7 -327.6,139.3 -315.2,139.0" fill="#65696d"/>
<polygon points="-271.4,139.0 -282.4,139.3 -294.1,139.7 -306.6,140.1 -320.0,140.5 -334.4,141.0 -349.8,141.4 -296.1,141.4 -282.6,141.0 -270.0,140.5 -258.3,140.1 -247.4,139.7 -237.2,139.3 -227.5,139.0" fill="#65696d"/>
<polygon points="-183.7,139.0 -191.9,139.3 -200.7,139.7 -210.0,140.1 -220.0,140.5 -230.7,141.0 -242.3,141.4 -188.5,141.4 -178.9,141.0 -170.0,140.5 -161.7,140.1 -153.9,139.7 -146.7,139.3 -139.9,139.0" fill="#65696d"/>
<polygon points="-96.0,139.0 -101.4,139.3 -107.2,139.7 -113.4,140.1 -120.0,140.5 -127.1,141.0 -134.7,141.4 -80.9,141.4 -75.3,141.0 -70.0,140.5 -65.1,140.1 -60.5,139.7 -56.2,139.3 -52.2,139.0" fill="#65696d"/>
<polygon points="-8.3,139.0 -11.0,139.3 -13.8,139.7 -16.8,140.1 -20.0,140.5 -23.5,141.0 -27.2,141.4 26.6,141.4 28.4,141.0 30.0,140.5 31.5,140.1 32.9,139.7 34.3,139.3 35.5,139.0" fill="#65696d"/>
<polygon points="79.4,139.0 79.5,139.3 79.7,139.7 79.8,140.1 80.0,140.5 80.2,141.0 80.4,141.4 134.2,141.4 132.0,141.0 130.0,140.5 128.1,140.1 126.4,139.7 124.8,139.3 123.2,139.0" fill="#65696d"/>
<polygon points="167.1,139.0 170.0,139.3 173.1,139.7 176.4,140.1 180.0,140.5 183.8,141.0 187.9,141.4 241.7,141.4 235.6,141.0 230.0,140.5 224.8,140.1 219.8,139.7 215.2,139.3 210.9,139.0" fill="#65696d"/>
<polygon points="254.8,139.0 260.5,139.3 266.6,139.7 273.1,140.1 280.0,140.5 287.5,141.0 295.5,141.4 349.3,141.4 339.3,141.0 330.0,140.5 321.4,140.1 313.3,139.7 305.7,139.3 298.6,139.0" fill="#65696d"/>
<polygon points="342.5,139.0 351.0,139.3 360.0,139.7 369.7,140.1 380.0,140.5 391.1,141.0 403.0,141.4 456.8,141.4 442.9,141.0 430.0,140.5 418.0,140.1 406.7,139.7 396.2,139.3 386.3,139.0" fill="#65696d"/>
<polygon points="430.2,139.0 441.4,139.3 453.5,139.7 466.3,140.1 480.0,140.5 494.7,141.0 510.6,141.4 564.4,141.4 546.6,141.0 530.0,140.5 514.6,140.1 500.2,139.7 486.7,139.3 474.0,139.0" fill="#65696d"/>
<polygon points="517.9,139.0 531.9,139.3 546.9,139.7 562.9,140.1 580.0,140.5 598.4,141.0 618.1,141.4 671.9,141.4 650.2,141.0 630.0,140.5 611.2,140.1 593.6,139.7 577.2,139.3 561.7,139.0" fill="#65696d"/>
<polygon points="-511.2,141.4 -534.1,142.0 -559.0,142.5 -586.0,143.2 -615.4,143.8 -647.5,144.6 -682.7,145.4 -613.2,145.4 -581.2,144.6 -552.0,143.8 -525.3,143.2 -500.8,142.5 -478.3,142.0 -457.4,141.4" fill="#65696d"/>
<polygon points="-403.6,141.4 -422.4,142.0 -442.7,142.5 -464.7,143.2 -488.7,143.8 -514.9,144.6 -543.7,145.4 -474.2,145.4 -448.6,144.6 -425.4,143.8 -404.1,143.2 -384.5,142.5 -366.5,142.0 -349.8,141.4" fill="#65696d"/>
<polygon points="-296.1,141.4 -310.6,142.0 -326.3,142.5 -343.4,143.2 -362.0,143.8 -382.3,144.6 -404.7,145.4 -335.1,145.4 -316.1,144.6 -298.7,143.8 -282.8,143.2 -268.2,142.5 -254.7,142.0 -242.3,141.4" fill="#65696d"/>
<polygon points="-188.5,141.4 -198.8,142.0 -210.0,142.5 -222.1,143.2 -235.3,143.8 -249.8,144.6 -265.6,145.4 -196.1,145.4 -183.5,144.6 -172.0,143.8 -161.5,143.2 -151.8,142.5 -143.0,142.0 -134.7,141.4" fill="#65696d"/>
<polygon points="-80.9,141.4 -87.1,142.0 -93.7,142.5 -100.9,143.2 -108.7,143.8 -117.2,144.6 -126.6,145.4 -57.1,145.4 -50.9,144.6 -45.3,143.8 -40.2,143.2 -35.5,142.5 -31.2,142.0 -27.2,141.4" fill="#65696d"/>
<polygon points="26.6,141.4 24.7,142.0 22.7,142.5 20.4,143.2 18.0,143.8 15.3,144.6 12.4,145.4 82.0,145.4 81.6,144.6 81.3,143.8 81.1,143.2 80.8,142.5 80.6,142.0 80.4,141.4" fill="#65696d"/>
<polygon points="134.2,141.4 136.5,142.0 139.0,142.5 141.7,143.2 144.7,143.8 147.9,144.6 151.5,145.4 221.0,145.4 214.2,144.6 208.0,143.8 202.3,143.2 197.1,142.5 192.4,142.0 187.9,141.4" fill="#65696d"/>
<polygon points="241.7,141.4 248.2,142.0 255.3,142.5 263.0,143.2 271.3,143.8 280.5,144.6 290.5,145.4 360.0,145.4 346.8,144.6 334.7,143.8 323.6,143.2 313.5,142.5 304.1,142.0 295.5,141.4" fill="#65696d"/>
<polygon points="349.3,141.4 360.0,142.0 371.6,142.5 384.3,143.2 398.0,143.8 413.0,144.6 429.5,145.4 499.0,145.4 479.3,144.6 461.4,143.8 444.9,143.2 429.8,142.5 415.9,142.0 403.0,141.4" fill="#65696d"/>
<polygon points="456.8,141.4 471.8,142.0 488.0,142.5 505.6,143.2 524.7,143.8 545.6,144.6 568.6,145.4 638.1,145.4 611.9,144.6 588.0,143.8 566.2,143.2 546.1,142.5 527.7,142.0 510.6,141.4" fill="#65696d"/>
<polygon points="564.4,141.4 583.6,142.0 604.3,142.5 626.8,143.2 651.4,143.8 678.2,144.6 707.6,145.4 777.1,145.4 744.5,144.6 714.7,143.8 687.5,143.2 662.5,142.5 639.4,142.0 618.1,141.4" fill="#65696d"/>
<polygon points="671.9,141.4 695.3,142.0 720.6,142.5 748.1,143.2 778.0,143.8 810.7,144.6 846.6,145.4 916.1,145.4 877.0,144.6 841.4,143.8 808.8,143.2 778.8,142.5 751.2,142.0 725.7,141.4" fill="#65696d"/>
<polygon points="-752.2,145.4 -791.0,146.2 -833.5,147.1 -880.4,148.1 -932.4,149.2 -990.4,150.4 -1055.5,151.8 -960.5,151.8 -900.9,150.4 -847.7,149.2 -800.1,148.1 -757.1,147.1 -718.2,146.2 -682.7,145.4" fill="#65696d"/>
<polygon points="-613.2,145.4 -645.4,146.2 -680.8,147.1 -719.8,148.1 -763.1,149.2 -811.3,150.4 -865.5,151.8 -770.5,151.8 -721.8,150.4 -678.4,149.2 -639.5,148.1 -604.4,147.1 -572.6,146.2 -543.7,145.4" fill="#65696d"/>
<polygon points="-474.2,145.4 -499.9,146.2 -528.1,147.1 -559.2,148.1 -593.8,149.2 -632.3,150.4 -675.5,151.8 -580.5,151.8 -542.8,150.4 -509.1,149.2 -479.0,148.1 -451.8,147.1 -427.1,146.2 -404.7,145.4" fill="#65696d"/>
<polygon points="-335.1,145.4 -354.3,146.2 -375.4,147.1 -398.7,148.1 -424.5,149.2 -453.2,150.4 -485.5,151.8 -390.5,151.8 -363.7,150.4 -339.8,149.2 -318.4,148.1 -299.1,147.1 -281.6,146.2 -265.6,145.4" fill="#65696d"/>
<polygon points="-196.1,145.4 -208.8,146.2 -222.7,147.1 -238.1,148.1 -255.2,149.2 -274.2,150.4 -295.5,151.8 -200.5,151.8 -184.6,150.4 -170.5,149.2 -157.8,148.1 -146.4,147.1 -136.0,146.2 -126.6,145.4" fill="#65696d"/>
<polygon points="-57.1,145.4 -63.3,146.2 -70.1,147.1 -77.5,148.1 -85.8,149.2 -95.1,150.4 -105.5,151.8 -10.5,151.8 -5.6,150.4 -1.2,149.2 2.7,148.1 6.3,147.1 9.5,146.2 12.4,145.4" fill="#65696d"/>
<polygon points="82.0,145.4 82.3,146.2 82.6,147.1 83.0,148.1 83.5,149.2 84.0,150.4 84.5,151.8 179.5,151.8 173.5,150.4 168.1,149.2 163.3,148.1 159.0,147.1 155.0,146.2 151.5,145.4" fill="#65696d"/>
<polygon points="221.0,145.4 227.8,146.2 235.3,147.1 243.6,148.1 252.8,149.2 263.0,150.4 274.5,151.8 369.5,151.8 352.5,150.4 337.4,149.2 323.9,148.1 311.7,147.1 300.6,146.2 290.5,145.4" fill="#65696d"/>
<polygon points="360.0,145.4 373.4,146.2 388.0,147.1 404.2,148.1 422.1,149.2 442.1,150.4 464.5,151.8 559.5,151.8 531.6,150.4 506.7,149.2 484.4,148.1 464.3,147.1 446.1,146.2 429.5,145.4" fill="#65696d"/>
<polygon points="499.0,145.4 518.9,146.2 540.7,147.1 564.7,148.1 591.4,149.2 621.1,150.4 654.5,151.8 749.5,151.8 710.7,150.4 676.1,149.2 645.0,148.1 617.0,147.1 591.7,146.2 568.6,145.4" fill="#65696d"/>
<polygon points="638.1,145.4 664.4,146.2 693.4,147.1 725.3,148.1 760.7,149.2 800.2,150.4 844.5,151.8 939.5,151.8 889.7,150.4 845.4,149.2 805.6,148.1 769.7,147.1 737.2,146.2 707.6,145.4" fill="#65696d"/>
<polygon points="777.1,145.4 810.0,146.2 846.1,147.1 885.9,148.1 930.0,149.2 979.3,150.4 1034.5,151.8 1129.5,151.8 1068.8,150.4 1014.7,149.2 966.2,148.1 922.4,147.1 882.7,146.2 846.6,145.4" fill="#65696d"/>
<rect x="0" y="110" width="150" height="40" fill="#7d9ab8" opacity="0.16"/>
<circle cx="75.9" cy="76.9" r="65.7" fill="url(#sp2)"/>
<circle cx="75.9" cy="76.9" r="65.7" fill="url(#rim2)"/>
</svg></g></svg>
<svg class="a" style="left:324px;top:357px" width="127" height="127" viewBox="0 0 127 127">
<rect x="0" y="0" width="127" height="127" fill="#161616"/>
<rect x="1" y="1" width="125" height="125" fill="#c2c2c2"/>
<path d="M31.0 125.99 L31.5 125.99 L32.0 125.99 L32.5 125.98 L33.0 125.98 L33.5 125.97 L34.0 125.97 L34.5 125.96 L35.0 125.95 L35.5 125.93 L36.0 125.92 L36.5 125.90 L37.0 125.88 L37.5 125.85 L38.0 125.82 L38.5 125.78 L39.0 125.74 L39.5 125.69 L40.0 125.62 L40.5 125.55 L41.0 125.47 L41.5 125.37 L42.0 125.26 L42.5 125.13 L43.0 124.98 L43.5 124.81 L44.0 124.62 L44.5 124.40 L45.0 124.16 L45.5 123.89 L46.0 123.58 L46.5 123.24 L47.0 122.87 L47.5 122.46 L48.0 122.02 L48.5 121.53 L49.0 121.00 L49.5 120.43 L50.0 119.82 L50.5 119.17 L51.0 118.48 L51.5 117.75 L52.0 116.99 L52.5 116.19 L53.0 115.36 L53.5 114.50 L54.0 113.62 L54.5 112.72 L55.0 111.81 L55.5 110.90 L56.0 109.99 L56.5 109.09 L57.0 108.20 L57.5 107.34 L58.0 106.51 L58.5 105.72 L59.0 104.98 L59.5 104.29 L60.0 103.67 L60.5 103.11 L61.0 102.63 L61.5 102.23 L62.0 101.91 L62.5 101.68 L63.0 101.55 L63.5 101.50 L64.0 101.55 L64.5 101.68 L65.0 101.91 L65.5 102.23 L66.0 102.63 L66.5 103.11 L67.0 103.67 L67.5 104.29 L68.0 104.98 L68.5 105.72 L69.0 106.51 L69.5 107.34 L70.0 108.20 L70.5 109.09 L71.0 109.99 L71.5 110.90 L72.0 111.81 L72.5 112.72 L73.0 113.62 L73.5 114.50 L74.0 115.36 L74.5 116.19 L75.0 116.99 L75.5 117.75 L76.0 118.48 L76.5 119.17 L77.0 119.82 L77.5 120.43 L78.0 121.00 L78.5 121.53 L79.0 122.02 L79.5 122.46 L80.0 122.87 L80.5 123.24 L81.0 123.58 L81.5 123.89 L82.0 124.16 L82.5 124.40 L83.0 124.62 L83.5 124.81 L84.0 124.98 L84.5 125.13 L85.0 125.26 L85.5 125.37 L86.0 125.47 L86.5 125.55 L87.0 125.62 L87.5 125.69 L88.0 125.74 L88.5 125.78 L89.0 125.82 L89.5 125.85 L90.0 125.88 L90.5 125.90 L91.0 125.92 L91.5 125.93 L92.0 125.95 L92.5 125.96 L93.0 125.97 L93.5 125.97 Z" fill="#ffffff"/>
</svg>
<div class="a" style="left:183.8px;top:494.5px;width:19px;height:19px;border-radius:50%;background:#282828"></div>
<svg class="a" style="left:186.3px;top:497px" width="14" height="14" viewBox="0 0 14 14"><path d="M7 1.2L12.8 7L7 12.8L1.2 7Z" fill="none" stroke="#bdbdbd" stroke-width="1.5"/></svg>
<div class="a" style="left:311.3px;top:492.4px;width:422.4px;height:23.1px;background:#383838;border-radius:4px;"></div>
<svg class="a" style="left:715.85px;top:501.5px" width="10.3" height="5" viewBox="0 0 10.3 5"><path d="M0 0H10.3L5.15 5Z" fill="#c8c8c8"/></svg>
<div class="a" style="left:183.8px;top:519.8px;width:19px;height:19px;border-radius:50%;background:#282828"></div>
<svg class="a" style="left:186.3px;top:522.3px" width="14" height="14" viewBox="0 0 14 14"><path d="M7 1.2L12.8 7L7 12.8L1.2 7Z" fill="none" stroke="#bdbdbd" stroke-width="1.5"/></svg>
<div class="a" style="left:311.3px;top:518.2px;width:422.4px;height:22.4px;background:#383838;border-radius:4px;"></div>
<svg class="a" style="left:715.85px;top:527.0px" width="10.3" height="5" viewBox="0 0 10.3 5"><path d="M0 0H10.3L5.15 5Z" fill="#c8c8c8"/></svg>
<div class="a" style="left:183.8px;top:545.7px;width:19px;height:19px;border-radius:50%;background:#282828"></div>
<svg class="a" style="left:186.3px;top:548.2px" width="14" height="14" viewBox="0 0 14 14"><path d="M7 1.2L12.8 7L7 12.8L1.2 7Z" fill="none" stroke="#bdbdbd" stroke-width="1.5"/></svg>
<svg class="a" style="left:213.4px;top:549.0px" width="8.5" height="12.5" viewBox="0 0 8.5 12.5"><path d="M1.2 1L6.5 6.25L1.2 11.5" fill="none" stroke="#d0d0d0" stroke-width="1.5"/></svg>
<div class="a" style="left:310.3px;top:543.2px;width:94.3px;height:24.09999999999991px;background:#1d1d1d;border:2px solid #6568bc;border-radius:5px"></div>
<div class="a" style="left:409px;top:552.0px;width:324.5px;height:5px;background:#1d1d1d;border-radius:3px"></div>
<svg class="a" style="left:409px;top:552.0px" width="162.20000000000005" height="5" viewBox="0 0 162.20000000000005 5" preserveAspectRatio="none"><path d="M0 2.5L2.5 0H162.20000000000005V5H2.5Z" fill="#5a5d9f"/></svg>
<svg class="a" style="left:568.4000000000001px;top:547.2px" width="5.6" height="14.6" viewBox="0 0 5.6 14.6"><path d="M0 2.2L2.8 0L5.6 2.2V12.4L2.8 14.6L0 12.4Z" fill="#bebebe"/></svg>
<div class="a" style="left:183.8px;top:573.1px;width:19px;height:19px;border-radius:50%;background:#282828"></div>
<svg class="a" style="left:186.3px;top:575.6px" width="14" height="14" viewBox="0 0 14 14"><path d="M7 1.2L12.8 7L7 12.8L1.2 7Z" fill="none" stroke="#bdbdbd" stroke-width="1.5"/></svg>
<svg class="a" style="left:213.4px;top:576.4px" width="8.5" height="12.5" viewBox="0 0 8.5 12.5"><path d="M1.2 1L6.5 6.25L1.2 11.5" fill="none" stroke="#d0d0d0" stroke-width="1.5"/></svg>
<div class="a" style="left:311.5px;top:571.9px;width:92.3px;height:21.800000000000068px;background:#1d1d1d;border-radius:4px;"></div>
<div class="a" style="left:409px;top:579.7px;width:324.5px;height:5px;background:#1d1d1d;border-radius:3px"></div>
<svg class="a" style="left:409px;top:579.7px" width="162.20000000000005" height="5" viewBox="0 0 162.20000000000005 5" preserveAspectRatio="none"><path d="M0 2.5L2.5 0H162.20000000000005V5H2.5Z" fill="#5a5d9f"/></svg>
<svg class="a" style="left:568.4000000000001px;top:574.9000000000001px" width="5.6" height="14.6" viewBox="0 0 5.6 14.6"><path d="M0 2.2L2.8 0L5.6 2.2V12.4L2.8 14.6L0 12.4Z" fill="#bebebe"/></svg>
<div class="a" style="left:183.8px;top:600.7px;width:19px;height:19px;border-radius:50%;background:#282828"></div>
<svg class="a" style="left:186.3px;top:603.2px" width="14" height="14" viewBox="0 0 14 14"><path d="M7 1.2L12.8 7L7 12.8L1.2 7Z" fill="none" stroke="#bdbdbd" stroke-width="1.5"/></svg>
<svg class="a" style="left:213.4px;top:604.0px" width="8.5" height="12.5" viewBox="0 0 8.5 12.5"><path d="M1.2 1L6.5 6.25L1.2 11.5" fill="none" stroke="#d0d0d0" stroke-width="1.5"/></svg>
<div class="a" style="left:311.5px;top:599.3px;width:92.3px;height:21.800000000000068px;background:#1d1d1d;border-radius:4px;"></div>
<div class="a" style="left:409px;top:607.1px;width:324.5px;height:5px;background:#1d1d1d;border-radius:3px"></div>
<svg class="a" style="left:408.5px;top:602.3000000000001px" width="5.6" height="14.6" viewBox="0 0 5.6 14.6"><path d="M0 2.2L2.8 0L5.6 2.2V12.4L2.8 14.6L0 12.4Z" fill="#bebebe"/></svg>
<div class="a" style="left:183.8px;top:628.4px;width:19px;height:19px;border-radius:50%;background:#282828"></div>
<svg class="a" style="left:186.3px;top:630.9px" width="14" height="14" viewBox="0 0 14 14"><path d="M7 1.2L12.8 7L7 12.8L1.2 7Z" fill="none" stroke="#bdbdbd" stroke-width="1.5"/></svg>
<svg class="a" style="left:213.4px;top:631.6999999999999px" width="8.5" height="12.5" viewBox="0 0 8.5 12.5"><path d="M1.2 1L6.5 6.25L1.2 11.5" fill="none" stroke="#d0d0d0" stroke-width="1.5"/></svg>
<div class="a" style="left:311.5px;top:627px;width:92.3px;height:21.799999999999955px;background:#1d1d1d;border-radius:4px;"></div>
<div class="a" style="left:409px;top:634.0px;width:324.5px;height:5px;background:#1d1d1d;border-radius:3px"></div>
<svg class="a" style="left:409px;top:634.0px" width="64.69999999999999" height="5" viewBox="0 0 64.69999999999999 5" preserveAspectRatio="none"><path d="M0 2.5L2.5 0H64.69999999999999V5H2.5Z" fill="#5a5d9f"/></svg>
<svg class="a" style="left:470.9px;top:629.2px" width="5.6" height="14.6" viewBox="0 0 5.6 14.6"><path d="M0 2.2L2.8 0L5.6 2.2V12.4L2.8 14.6L0 12.4Z" fill="#bebebe"/></svg>
<div class="a" style="left:183.8px;top:656.0px;width:19px;height:19px;border-radius:50%;background:#282828"></div>
<svg class="a" style="left:186.3px;top:658.5px" width="14" height="14" viewBox="0 0 14 14"><path d="M7 1.2L12.8 7L7 12.8L1.2 7Z" fill="none" stroke="#bdbdbd" stroke-width="1.5"/></svg>
<svg class="a" style="left:213.4px;top:659.3px" width="8.5" height="12.5" viewBox="0 0 8.5 12.5"><path d="M1.2 1L6.5 6.25L1.2 11.5" fill="none" stroke="#d0d0d0" stroke-width="1.5"/></svg>
<div class="a" style="left:311.5px;top:654.5px;width:92.3px;height:22.0px;background:#1d1d1d;border-radius:4px;"></div>
<div class="a" style="left:409px;top:661.7px;width:324.5px;height:5px;background:#1d1d1d;border-radius:3px"></div>
<svg class="a" style="left:409px;top:661.7px" width="322.29999999999995" height="5" viewBox="0 0 322.29999999999995 5" preserveAspectRatio="none"><path d="M0 2.5L2.5 0H322.29999999999995V5H2.5Z" fill="#5a5d9f"/></svg>
<svg class="a" style="left:728.5px;top:656.9000000000001px" width="5.6" height="14.6" viewBox="0 0 5.6 14.6"><path d="M0 2.2L2.8 0L5.6 2.2V12.4L2.8 14.6L0 12.4Z" fill="#bebebe"/></svg>
<div class="a" style="left:311.4px;top:684px;width:16px;height:16px;border:2.7px solid #6a6a6a;border-radius:3px"></div>
<div class="a" style="left:182px;top:712.3px;width:550.3px;height:1px;background:#1f1f1f"></div>
<svg class="a" style="left:195.3px;top:724.5px" width="11" height="7" viewBox="0 0 11 7"><path d="M1 1.2L5.5 5L10 1.2" fill="none" stroke="#cfcfcf" stroke-width="1.5"/></svg>
<div class="a" style="left:193.7px;top:749.9px;width:19px;height:19px;border-radius:50%;background:#282828"></div>
<svg class="a" style="left:196.2px;top:752.4px" width="14" height="14" viewBox="0 0 14 14"><path d="M7 1.2L12.8 7L7 12.8L1.2 7Z" fill="none" stroke="#bdbdbd" stroke-width="1.5"/></svg>
<svg class="a" style="left:274.8px;top:753.2px" width="8.2" height="12" viewBox="0 0 8.2 12"><path d="M1.2 1L6.2 6.0L1.2 11" fill="none" stroke="#d0d0d0" stroke-width="1.5"/></svg>
<div class="a" style="left:286px;top:747.8px;width:83.4px;height:19.7px;background:#ffffff"></div>
<svg class="a" style="left:379.8px;top:746.3px" width="22" height="22" viewBox="-11 -11 22 22"><g transform="rotate(45) scale(1.0)"><path d="M-2.5 -7.2V-9.6A2.5 2.5 0 0 1 2.5 -9.6V-7.2Z" fill="#a8a8a8"/><rect x="-4.4" y="-7.6" width="8.8" height="1.9" fill="#a8a8a8"/><path d="M-2.5 -5.6V6.4L0 9.6L2.5 6.4V-5.6" fill="none" stroke="#a8a8a8" stroke-width="1.5" stroke-linejoin="round"/></g></svg>
<div class="a" style="left:193.7px;top:776.1px;width:19px;height:19px;border-radius:50%;background:#282828"></div>
<svg class="a" style="left:196.2px;top:778.6px" width="14" height="14" viewBox="0 0 14 14"><path d="M7 1.2L12.8 7L7 12.8L1.2 7Z" fill="none" stroke="#bdbdbd" stroke-width="1.5"/></svg>
<div class="a" style="left:286px;top:773.7px;width:92.3px;height:22.9px;background:#1d1d1d;border-radius:4px;"></div>
<div class="a" style="left:384px;top:781.7px;width:350px;height:5px;background:#1d1d1d;border-radius:3px"></div>
<svg class="a" style="left:384px;top:781.7px" width="347.20000000000005" height="5" viewBox="0 0 347.20000000000005 5" preserveAspectRatio="none"><path d="M0 2.5L2.5 0H347.20000000000005V5H2.5Z" fill="#5a5d9f"/></svg>
<svg class="a" style="left:728.4000000000001px;top:776.9000000000001px" width="5.6" height="14.6" viewBox="0 0 5.6 14.6"><path d="M0 2.2L2.8 0L5.6 2.2V12.4L2.8 14.6L0 12.4Z" fill="#bebebe"/></svg>
<div class="a" style="left:286px;top:800.4px;width:22.6px;height:28.8px;background:#3a3a3a;border-radius:50%"></div>
<svg class="a" style="left:292.3px;top:813.0px" width="10" height="5.2" viewBox="0 0 10 5.2"><path d="M0 0H10L5.0 5.2Z" fill="#c8c8c8"/></svg>
<div class="a" style="left:313.6px;top:801.6px;width:396.1px;height:25.3px;background:#3a3a3a;border-radius:12.7px"></div>
<svg class="a" style="left:715px;top:806px" width="18" height="16" viewBox="0 0 18 16"><path d="M0.6 4V2.2Q0.6 1 1.8 1H6.6L8.4 2.8V4Z" fill="#9c9c9c"/><rect x="1.1" y="3.5" width="14.8" height="10.8" rx="1.2" fill="none" stroke="#9c9c9c" stroke-width="1.4"/></svg>
<svg class="a" style="left:196.2px;top:838.5px" width="14" height="14" viewBox="0 0 14 14"><path d="M7 1.2L12.8 7L7 12.8L1.2 7Z" fill="none" stroke="#464646" stroke-width="1.5"/></svg>
<div class="a" style="left:286px;top:834.3px;width:447.8px;height:22.6px;background:#303030;border-radius:4px;"></div>
<svg class="a" style="left:716.35px;top:844.4000000000001px" width="10.3" height="5.6" viewBox="0 0 10.3 5.6"><path d="M0 0H10.3L5.15 5.6Z" fill="#555555"/></svg>
<svg class="a" style="left:196.2px;top:864.2px" width="14" height="14" viewBox="0 0 14 14"><path d="M7 1.2L12.8 7L7 12.8L1.2 7Z" fill="none" stroke="#464646" stroke-width="1.5"/></svg>
<div class="a" style="left:286px;top:860.4px;width:92.3px;height:21.4px;background:#262626;border-radius:4px;"></div>
<div class="a" style="left:384px;top:868.0px;width:349px;height:5px;background:#1d1d1d;border-radius:3px"></div>
<svg class="a" style="left:384px;top:868.0px" width="346.5" height="5" viewBox="0 0 346.5 5" preserveAspectRatio="none"><path d="M0 2.5L2.5 0H346.5V5H2.5Z" fill="#32355a"/></svg>
<div class="a" style="left:182px;top:897.4px;width:550.3px;height:1px;background:#1f1f1f"></div>
<svg class="a" style="left:196.2px;top:908.5px" width="8" height="11.5" viewBox="0 0 8 11.5"><path d="M1.2 1L6 5.75L1.2 10.5" fill="none" stroke="#cfcfcf" stroke-width="1.5"/></svg>
<div class="a" style="left:182px;top:931.2px;width:550.3px;height:1px;background:#1f1f1f"></div>
<div class="t" style="position:absolute;white-space:nowrap;transform-origin:0 0;left:36.65px;top:10.49px;font-size:15px;line-height:18.00px;color:#101010;font-weight:400;transform:scaleX(0.7448)">マテリアルエディタ</div>
<div class="t" style="position:absolute;white-space:nowrap;transform-origin:0 0;left:13.03px;top:235.92px;font-size:14px;line-height:16.80px;color:#d6d6d6;font-weight:400;transform:scaleX(0.8426)">提灯のクチ</div>
<div class="t" style="position:absolute;white-space:nowrap;transform-origin:0 0;left:34.56px;top:291.09px;font-size:14px;line-height:16.80px;color:#c6c6c6;font-weight:400;transform:scaleX(0.7011)">カラー</div>
<div class="t" style="position:absolute;white-space:nowrap;transform-origin:0 0;left:34.13px;top:317.80px;font-size:12px;line-height:14.40px;color:#c6c6c6;font-weight:400;transform:scaleX(1.1788)">拡散</div>
<div class="t" style="position:absolute;white-space:nowrap;transform-origin:0 0;left:34.47px;top:341.70px;font-size:13px;line-height:15.60px;color:#c6c6c6;font-weight:400;transform:scaleX(1.1099)">発光</div>
<div class="t" style="position:absolute;white-space:nowrap;transform-origin:0 0;left:34.28px;top:367.20px;font-size:13px;line-height:15.60px;color:#c6c6c6;font-weight:400;transform:scaleX(1.1034)">透過</div>
<div class="t" style="position:absolute;white-space:nowrap;transform-origin:0 0;left:33.91px;top:392.80px;font-size:12px;line-height:14.40px;color:#f39a38;font-weight:400;transform:scaleX(1.2122)">反射</div>
<div class="t" style="position:absolute;white-space:nowrap;transform-origin:0 0;left:35.06px;top:417.20px;font-size:13px;line-height:15.60px;color:#c6c6c6;font-weight:400;transform:scaleX(1.0382)">環境</div>
<div class="t" style="position:absolute;white-space:nowrap;transform-origin:0 0;left:33.99px;top:442.50px;font-size:12px;line-height:14.40px;color:#c6c6c6;font-weight:400;transform:scaleX(1.2883)">霧</div>
<div class="t" style="position:absolute;white-space:nowrap;transform-origin:0 0;left:34.21px;top:467.35px;font-size:13px;line-height:15.60px;color:#c6c6c6;font-weight:400;transform:scaleX(0.8003)">バンプ</div>
<div class="t" style="position:absolute;white-space:nowrap;transform-origin:0 0;left:34.14px;top:492.30px;font-size:12px;line-height:14.40px;color:#c6c6c6;font-weight:400;transform:scaleX(1.1915)">法線</div>
<div class="t" style="position:absolute;white-space:nowrap;transform-origin:0 0;left:34.47px;top:513.96px;font-size:16px;line-height:19.20px;color:#c6c6c6;font-weight:400;transform:scaleX(0.6672)">アルファ</div>
<div class="t" style="position:absolute;white-space:nowrap;transform-origin:0 0;left:34.41px;top:541.81px;font-size:13px;line-height:15.60px;color:#c6c6c6;font-weight:400;transform:scaleX(0.7954)">グロー</div>
<div class="t" style="position:absolute;white-space:nowrap;transform-origin:0 0;left:34.08px;top:568.25px;font-size:12px;line-height:14.40px;color:#c6c6c6;font-weight:400;transform:scaleX(1.1623)">変位</div>
<div class="t" style="position:absolute;white-space:nowrap;transform-origin:0 0;left:33.25px;top:590.47px;font-size:14px;line-height:16.80px;color:#c6c6c6;font-weight:400;transform:scaleX(0.7112)">ビューポート</div>
<div class="t" style="position:absolute;white-space:nowrap;transform-origin:0 0;left:34.17px;top:623.30px;font-size:13px;line-height:15.60px;color:#c6c6c6;font-weight:400;transform:scaleX(1.0531)">G<span style="margin-left:0.4px">I</span>設定</div>
<div class="t" style="position:absolute;white-space:nowrap;transform-origin:0 0;left:35.31px;top:646.74px;font-size:15px;line-height:18.00px;color:#c6c6c6;font-weight:400;transform:scaleX(0.7471)">適用オブジェクト</div>
<div class="t" style="position:absolute;white-space:nowrap;transform-origin:0 0;left:184.33px;top:81.99px;font-size:14px;line-height:16.80px;color:#efefef;font-weight:400;transform:scaleX(1.0399)">反射</div>
<div class="t" style="position:absolute;white-space:nowrap;transform-origin:0 0;left:212.63px;top:109.41px;font-size:13px;line-height:15.60px;color:#c6c6c6;font-weight:400;transform:scaleX(0.7694)">レイヤー セットアップ</div>
<div class="t" style="position:absolute;white-space:nowrap;transform-origin:0 0;left:195.46px;top:136.75px;font-size:14px;line-height:16.80px;color:#f4f4f4;font-weight:400;transform:scaleX(0.7363)">レイヤー</div>
<div class="t" style="position:absolute;white-space:nowrap;transform-origin:0 0;left:262.98px;top:134.30px;font-size:16px;line-height:19.20px;color:#f4f4f4;font-weight:400;transform:scaleX(0.6396)">デフォルトスペキュラ</div>
<div class="t" style="position:absolute;white-space:nowrap;transform-origin:0 0;left:208.99px;top:172.00px;font-size:13px;line-height:15.60px;color:#dcdcdc;font-weight:400;transform:scaleX(1.0142)">追加...</div>
<div class="t" style="position:absolute;white-space:nowrap;transform-origin:0 0;left:308.61px;top:171.18px;font-size:13px;line-height:15.60px;color:#dcdcdc;font-weight:400;transform:scaleX(1.1003)">削除</div>
<div class="t" style="position:absolute;white-space:nowrap;transform-origin:0 0;left:400.90px;top:170.90px;font-size:14px;line-height:16.80px;color:#dcdcdc;font-weight:400;transform:scaleX(0.7392)">コピー</div>
<div class="t" style="position:absolute;white-space:nowrap;transform-origin:0 0;left:491.81px;top:169.30px;font-size:15px;line-height:18.00px;color:#626262;font-weight:400;transform:scaleX(0.6985)">ペースト</div>
<div class="t" style="position:absolute;white-space:nowrap;transform-origin:0 0;left:219.00px;top:203.40px;font-size:16px;line-height:19.20px;color:#f39a38;font-weight:400;transform:scaleX(0.6307)">デフォルトスペキュラ</div>
<div class="t" style="position:absolute;white-space:nowrap;transform-origin:0 0;left:335.85px;top:207.20px;font-size:15px;line-height:18.00px;color:#dcdcdc;font-weight:400;transform:scaleX(1.0202)">加算</div>
<div class="t" style="-webkit-text-stroke:0;position:absolute;white-space:nowrap;transform-origin:0 0;left:424.43px;top:207.10px;font-size:14px;line-height:16.80px;color:#dcdcdc;font-weight:400;transform:scaleX(0.9270)">100 %</div>
<div class="t" style="position:absolute;white-space:nowrap;transform-origin:0 0;left:212.10px;top:247.70px;font-size:11px;line-height:13.20px;color:#c6c6c6;font-weight:400;transform:scaleX(1.1364)">全ての鏡面反射の明るさ</div>
<div class="t" style="-webkit-text-stroke:0;position:absolute;white-space:nowrap;transform-origin:0 0;left:381.84px;top:246.70px;font-size:14px;line-height:16.80px;color:#dcdcdc;font-weight:400;transform:scaleX(0.9486)">100 %</div>
<div class="t" style="position:absolute;white-space:nowrap;transform-origin:0 0;left:213.01px;top:274.90px;font-size:12px;line-height:14.40px;color:#c6c6c6;font-weight:400;transform:scaleX(0.9150)">全てのスペキュラの明るさ</div>
<div class="t" style="-webkit-text-stroke:0;position:absolute;white-space:nowrap;transform-origin:0 0;left:381.84px;top:273.70px;font-size:14px;line-height:16.80px;color:#dcdcdc;font-weight:400;transform:scaleX(0.9486)">100 %</div>
<div class="t" style="position:absolute;white-space:nowrap;transform-origin:0 0;left:213.47px;top:299.73px;font-size:13px;line-height:15.60px;color:#c6c6c6;font-weight:400;transform:scaleX(0.8704)">パスを分ける</div>
<div class="t" style="position:absolute;white-space:nowrap;transform-origin:0 0;left:186.37px;top:336.60px;font-size:13px;line-height:15.60px;color:#efefef;font-weight:700;transform:scaleX(0.7905)">デフォルトスペキュラ</div>
<div class="t" style="position:absolute;white-space:nowrap;transform-origin:0 0;left:211.00px;top:496.00px;font-size:13px;line-height:15.60px;color:#c6c6c6;font-weight:400;transform:scaleX(0.8330)">タイプ</div>
<div class="t" style="position:absolute;white-space:nowrap;transform-origin:0 0;left:212.31px;top:522.05px;font-size:13px;line-height:15.60px;color:#c6c6c6;font-weight:400;transform:scaleX(1.1081)">減衰</div>
<div class="t" style="position:absolute;white-space:nowrap;transform-origin:0 0;left:227.00px;top:546.89px;font-size:13px;line-height:15.60px;color:#c6c6c6;font-weight:400;transform:scaleX(1.0853)">幅</div>
<div class="t" style="position:absolute;white-space:nowrap;transform-origin:0 0;left:226.33px;top:576.05px;font-size:13px;line-height:15.60px;color:#c6c6c6;font-weight:400;transform:scaleX(1.0956)">減衰</div>
<div class="t" style="position:absolute;white-space:nowrap;transform-origin:0 0;left:226.21px;top:603.90px;font-size:12px;line-height:14.40px;color:#c6c6c6;font-weight:400;transform:scaleX(1.1520)">内部幅</div>
<div class="t" style="position:absolute;white-space:nowrap;transform-origin:0 0;left:225.55px;top:629.31px;font-size:14px;line-height:16.80px;color:#c6c6c6;font-weight:400;transform:scaleX(0.7969)">スペキュラ強度</div>
<div class="t" style="position:absolute;white-space:nowrap;transform-origin:0 0;left:226.47px;top:655.73px;font-size:15px;line-height:18.00px;color:#c6c6c6;font-weight:400;transform:scaleX(0.7853)">バンプ強度</div>
<div class="t" style="position:absolute;white-space:nowrap;transform-origin:0 0;left:211.97px;top:682.58px;font-size:14px;line-height:16.80px;color:#c6c6c6;font-weight:400;transform:scaleX(0.8177)">パスを分ける</div>
<div class="t" style="position:absolute;white-space:nowrap;transform-origin:0 0;left:319.96px;top:493.99px;font-size:15px;line-height:18.00px;color:#dcdcdc;font-weight:400;transform:scaleX(0.7013)">スペキュラ - ブリン (レガシー)</div>
<div class="t" style="position:absolute;white-space:nowrap;transform-origin:0 0;left:319.46px;top:520.75px;font-size:14px;line-height:16.80px;color:#dcdcdc;font-weight:400;transform:scaleX(1.0147)">加算</div>
<div class="t" style="-webkit-text-stroke:0;position:absolute;white-space:nowrap;transform-origin:0 0;left:341.82px;top:547.40px;font-size:14px;line-height:16.80px;color:#dcdcdc;font-weight:400;transform:scaleX(0.9637)">50 %</div>
<div class="t" style="-webkit-text-stroke:0;position:absolute;white-space:nowrap;transform-origin:0 0;left:346.52px;top:575.20px;font-size:14px;line-height:16.80px;color:#dcdcdc;font-weight:400;transform:scaleX(0.9215)">0 %</div>
<div class="t" style="-webkit-text-stroke:0;position:absolute;white-space:nowrap;transform-origin:0 0;left:346.52px;top:602.70px;font-size:14px;line-height:16.80px;color:#dcdcdc;font-weight:400;transform:scaleX(0.9215)">0 %</div>
<div class="t" style="-webkit-text-stroke:0;position:absolute;white-space:nowrap;transform-origin:0 0;left:342.24px;top:630.60px;font-size:14px;line-height:16.80px;color:#dcdcdc;font-weight:400;transform:scaleX(0.9580)">20 %</div>
<div class="t" style="-webkit-text-stroke:0;position:absolute;white-space:nowrap;transform-origin:0 0;left:339.03px;top:658.10px;font-size:14px;line-height:16.80px;color:#dcdcdc;font-weight:400;transform:scaleX(0.9510)">100 %</div>
<div class="t" style="position:absolute;white-space:nowrap;transform-origin:0 0;left:211.89px;top:721.50px;font-size:13px;line-height:15.60px;color:#efefef;font-weight:700;transform:scaleX(0.7116)">レイヤーカラー</div>
<div class="t" style="position:absolute;white-space:nowrap;transform-origin:0 0;left:222.05px;top:750.21px;font-size:14px;line-height:16.80px;color:#c6c6c6;font-weight:400;transform:scaleX(0.7032)">カラー</div>
<div class="t" style="position:absolute;white-space:nowrap;transform-origin:0 0;left:221.30px;top:776.90px;font-size:14px;line-height:16.80px;color:#c6c6c6;font-weight:400;transform:scaleX(0.8762)">明るさ</div>
<div class="t" style="-webkit-text-stroke:0;position:absolute;white-space:nowrap;transform-origin:0 0;left:313.79px;top:777.40px;font-size:14px;line-height:16.80px;color:#dcdcdc;font-weight:400;transform:scaleX(0.9618)">100 %</div>
<div class="t" style="position:absolute;white-space:nowrap;transform-origin:0 0;left:221.88px;top:807.10px;font-size:15px;line-height:18.00px;color:#c6c6c6;font-weight:400;transform:scaleX(0.7126)">テクスチャ</div>
<div class="t" style="position:absolute;white-space:nowrap;transform-origin:0 0;left:221.88px;top:835.76px;font-size:15px;line-height:18.00px;color:#5c5c5c;font-weight:400;transform:scaleX(0.7867)">混合モード</div>
<div class="t" style="position:absolute;white-space:nowrap;transform-origin:0 0;left:295.36px;top:838.86px;font-size:13px;line-height:15.60px;color:#5c5c5c;font-weight:400;transform:scaleX(1.1019)">通常</div>
<div class="t" style="position:absolute;white-space:nowrap;transform-origin:0 0;left:222.07px;top:862.90px;font-size:14px;line-height:16.80px;color:#5c5c5c;font-weight:400;transform:scaleX(0.9980)">混合強度</div>
<div class="t" style="-webkit-text-stroke:0;position:absolute;white-space:nowrap;transform-origin:0 0;left:313.79px;top:863.90px;font-size:14px;line-height:16.80px;color:#5c5c5c;font-weight:400;transform:scaleX(0.9618)">100 %</div>
<div class="t" style="position:absolute;white-space:nowrap;transform-origin:0 0;left:212.38px;top:906.70px;font-size:13px;line-height:15.60px;color:#efefef;font-weight:700;transform:scaleX(0.7430)">レイヤーマスク</div>
</div>
</body>
</html>
